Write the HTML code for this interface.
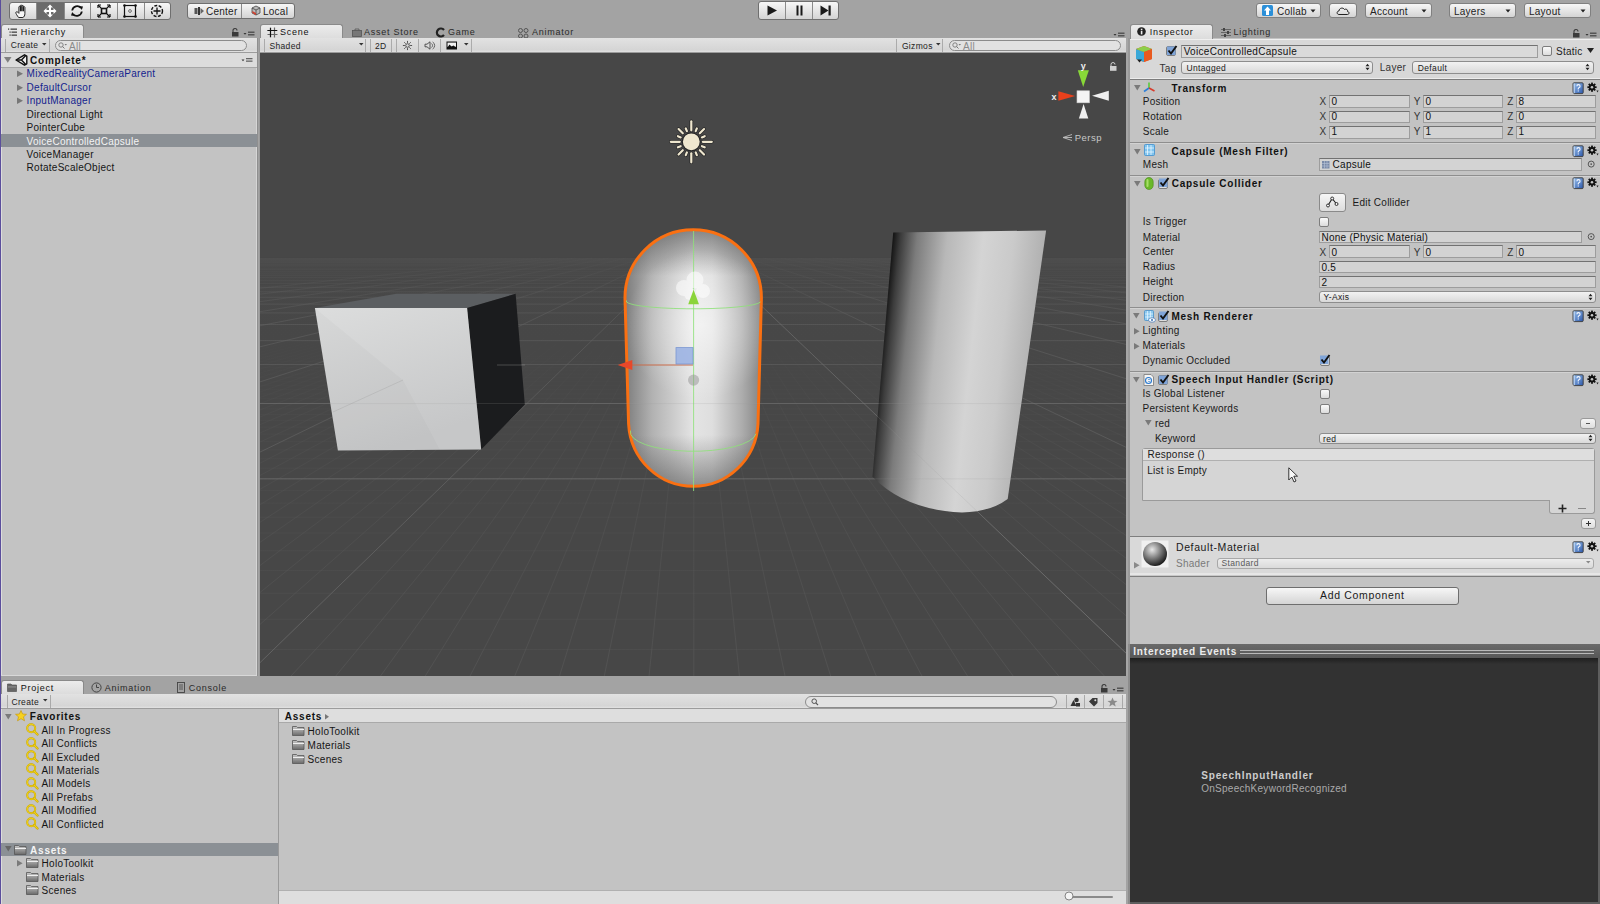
<!DOCTYPE html><html><head><meta charset="utf-8"><style>*{box-sizing:border-box;margin:0;padding:0}
html,body{width:1600px;height:904px;overflow:hidden}
body{position:relative;background:#a3a3a3;font-family:"Liberation Sans",sans-serif;font-size:9.5px;color:#111}
.a{position:absolute}
.t{position:absolute;white-space:pre;line-height:12px}
.tab{position:absolute;border:1px solid #8a8a8a;border-bottom:none;border-radius:3px 3px 0 0;background:linear-gradient(#ececec,#dcdcdc)}
.tb{position:absolute;background:linear-gradient(#e2e2e2,#d5d5d5 85%,#e2e2e2);border-bottom:1px solid #9c9c9c}
.btn{position:absolute;border:1px solid #6f6f6f;border-radius:3px;background:linear-gradient(#f7f7f7,#d4d4d4)}
.fld{position:absolute;background:#d3d3d3;border:1px solid #9d9d9d;border-top-color:#727272}
.dd{position:absolute;border:1px solid #8d8d8d;border-radius:3px;background:linear-gradient(#f2f2f2,#d9d9d9)}
.sep{position:absolute;width:1px;background:#a8a8a8}
svg.a{overflow:visible}
</style></head><body>
<div class="btn" style="left:9px;top:2px;width:162px;height:18px"></div>
<div class="a" style="left:36.0px;top:3.0px;width:28.0px;height:16.0px;background:#6b6b6b"></div>
<div class="a" style="left:36.0px;top:3.0px;width:1.0px;height:16.0px;background:#8a8a8a"></div>
<div class="a" style="left:64.0px;top:3.0px;width:1.0px;height:16.0px;background:#8a8a8a"></div>
<div class="a" style="left:90.0px;top:3.0px;width:1.0px;height:16.0px;background:#8a8a8a"></div>
<div class="a" style="left:117.0px;top:3.0px;width:1.0px;height:16.0px;background:#8a8a8a"></div>
<div class="a" style="left:144.0px;top:3.0px;width:1.0px;height:16.0px;background:#8a8a8a"></div>
<svg class="a" style="left:14px;top:3px;" width="16" height="16" viewBox="0 0 16 16"><path d="M4.6 14.5 C3.2 12.6 1.6 10.6 1.9 9.3 C2.3 8.4 3.4 8.7 4.3 9.7 L4.9 10.3 V4 C4.9 3 6.4 3 6.4 4 V8.2 V2.8 C6.4 1.8 7.9 1.8 7.9 2.8 V8.2 V3.2 C7.9 2.2 9.4 2.2 9.4 3.2 V8.2 V4.4 C9.4 3.4 10.9 3.4 10.9 4.4 V10.6 C10.9 12.6 10.1 14 8.9 14.5 Z" fill="#f6f6f6" stroke="#1a1a1a" stroke-width="0.95" stroke-linejoin="round"/></svg>
<svg class="a" style="left:42px;top:3px;" width="16" height="16" viewBox="0 0 16 16"><path d="M8 1.5 L11 4.5 L9 4.5 L9 7 L11.5 7 L11.5 5 L14.5 8 L11.5 11 L11.5 9 L9 9 L9 11.5 L11 11.5 L8 14.5 L5 11.5 L7 11.5 L7 9 L4.5 9 L4.5 11 L1.5 8 L4.5 5 L4.5 7 L7 7 L7 4.5 L5 4.5 Z" fill="#fff"/></svg>
<svg class="a" style="left:69px;top:3px;" width="16" height="16" viewBox="0 0 16 16"><path d="M3.2 7.5 A5 5 0 0 1 12 5" fill="none" stroke="#111" stroke-width="1.8"/><path d="M12.8 8.5 A5 5 0 0 1 4 11" fill="none" stroke="#111" stroke-width="1.8"/><path d="M10 3 L14 3.5 L12.8 7 Z" fill="#111"/><path d="M6 13 L2 12.5 L3.2 9 Z" fill="#111"/></svg>
<svg class="a" style="left:96px;top:3px;" width="16" height="16" viewBox="0 0 16 16"><rect x="5.5" y="5.5" width="5" height="5" fill="none" stroke="#111" stroke-width="1.6"/><path d="M2 2 L5 5 M14 2 L11 5 M2 14 L5 11 M14 14 L11 11" stroke="#111" stroke-width="1.2"/><path d="M2 2 h3 M2 2 v3 M14 2 h-3 M14 2 v3 M2 14 h3 M2 14 v-3 M14 14 h-3 M14 14 v-3" stroke="#111" stroke-width="1.2"/></svg>
<svg class="a" style="left:122px;top:3px;" width="16" height="16" viewBox="0 0 16 16"><rect x="2.5" y="2.5" width="11" height="11" fill="none" stroke="#111" stroke-width="1.2"/><circle cx="2.5" cy="2.5" r="1.3" fill="#111"/><circle cx="13.5" cy="2.5" r="1.3" fill="#111"/><circle cx="2.5" cy="13.5" r="1.3" fill="#111"/><circle cx="13.5" cy="13.5" r="1.3" fill="#111"/><circle cx="8" cy="8" r="1.4" fill="none" stroke="#555" stroke-width="0.8"/></svg>
<svg class="a" style="left:149px;top:3px;" width="16" height="16" viewBox="0 0 16 16"><circle cx="8" cy="8" r="5.5" fill="none" stroke="#111" stroke-width="1.4" stroke-dasharray="3 1.5"/><path d="M8 4.5 V11.5 M4.5 8 H11.5" stroke="#111" stroke-width="1.3"/></svg>
<div class="btn" style="left:187px;top:3px;width:108px;height:16px"></div>
<div class="a" style="left:241.0px;top:4.0px;width:1.0px;height:14.0px;background:#8a8a8a"></div>
<svg class="a" style="left:194px;top:6px;" width="12" height="10" viewBox="0 0 12 10"><rect x="0.5" y="2" width="3" height="6" fill="#555"/><rect x="4" y="1" width="2" height="8" fill="#333"/><path d="M6.5 2 L10 5 L6.5 8 Z" fill="#666"/></svg>
<div class="t" style="left:206.0px;top:6.0px;font-size:10px;color:#222;letter-spacing:0.25px;">Center</div>
<svg class="a" style="left:251px;top:5px;" width="10" height="12" viewBox="0 0 10 12"><path d="M5 1 L9 3 L9 8 L5 10 L1 8 L1 3 Z" fill="#bbb" stroke="#444" stroke-width="0.8"/><path d="M1 3 L5 5 L9 3 M5 5 V10" stroke="#444" stroke-width="0.8" fill="none"/><path d="M1.3 6 L5 8 L5 10 L1.3 8Z" fill="#d04030"/></svg>
<div class="t" style="left:263.0px;top:6.0px;font-size:10px;color:#222;letter-spacing:0.25px;">Local</div>
<div class="btn" style="left:758px;top:1px;width:81px;height:19px"></div>
<div class="a" style="left:785.0px;top:2.0px;width:1.0px;height:17.0px;background:#8a8a8a"></div>
<div class="a" style="left:812.0px;top:2.0px;width:1.0px;height:17.0px;background:#8a8a8a"></div>
<svg class="a" style="left:765px;top:4px;" width="14" height="13" viewBox="0 0 14 13"><path d="M2.5 1.5 L12 6.5 L2.5 11.5 Z" fill="#1a1a1a"/></svg>
<svg class="a" style="left:792px;top:4px;" width="14" height="13" viewBox="0 0 14 13"><rect x="4.5" y="1.5" width="2" height="10" fill="#1a1a1a"/><rect x="8.5" y="1.5" width="2" height="10" fill="#1a1a1a"/></svg>
<svg class="a" style="left:819px;top:4px;" width="14" height="13" viewBox="0 0 14 13"><path d="M1.5 1.5 L9.5 6.5 L1.5 11.5 Z" fill="#1a1a1a"/><rect x="9.5" y="1.5" width="2.2" height="10" fill="#1a1a1a"/></svg>
<div class="btn" style="left:1256px;top:3px;width:65px;height:15px;border-color:#808080"></div>
<div class="t" style="left:1277.0px;top:6.0px;font-size:10px;color:#222;letter-spacing:0.25px;">Collab</div>
<svg class="a" style="left:1310px;top:9px;" width="6" height="4" viewBox="0 0 6 4"><path d="M0.5 0.5 L5.5 0.5 L3 3.5 Z" fill="#222"/></svg>
<svg class="a" style="left:1262px;top:5px;" width="11" height="11" viewBox="0 0 11 11"><rect x="0" y="0" width="11" height="11" rx="1.5" fill="#2b8fd8"/><path d="M5.5 1.5 L9 5.5 L7 5.5 L7 10 L4 10 L4 5.5 L2 5.5 Z" fill="#fff"/></svg>
<div class="btn" style="left:1329px;top:3px;width:28px;height:15px;border-color:#808080"></div>
<svg class="a" style="left:1336px;top:6px;" width="14" height="10" viewBox="0 0 14 10"><path d="M3 8.5 C0.5 8.5 0.5 5 3 5 C3 2 7 1 8.5 3.5 C10 2.5 12 3.5 11.5 5.5 C13.5 5.5 13.5 8.5 11.5 8.5 Z" fill="none" stroke="#222" stroke-width="1"/></svg>
<div class="btn" style="left:1365px;top:3px;width:67px;height:15px;border-color:#808080"></div>
<div class="t" style="left:1370.0px;top:6.0px;font-size:10px;color:#222;letter-spacing:0.25px;">Account</div>
<svg class="a" style="left:1421px;top:9px;" width="6" height="4" viewBox="0 0 6 4"><path d="M0.5 0.5 L5.5 0.5 L3 3.5 Z" fill="#222"/></svg>
<div class="btn" style="left:1449px;top:3px;width:67px;height:15px;border-color:#808080"></div>
<div class="t" style="left:1454.0px;top:6.0px;font-size:10px;color:#222;letter-spacing:0.25px;">Layers</div>
<svg class="a" style="left:1505px;top:9px;" width="6" height="4" viewBox="0 0 6 4"><path d="M0.5 0.5 L5.5 0.5 L3 3.5 Z" fill="#222"/></svg>
<div class="btn" style="left:1524px;top:3px;width:67px;height:15px;border-color:#808080"></div>
<div class="t" style="left:1529.0px;top:6.0px;font-size:10px;color:#222;letter-spacing:0.25px;">Layout</div>
<svg class="a" style="left:1580px;top:9px;" width="6" height="4" viewBox="0 0 6 4"><path d="M0.5 0.5 L5.5 0.5 L3 3.5 Z" fill="#222"/></svg>
<div class="a" style="left:0;top:0;width:1px;height:904px;background:#5b4e9c"></div>
<div class="a" style="left:1.0px;top:38.0px;width:256.0px;height:638.0px;background:#c3c3c3"></div>
<div class="a" style="left:257.0px;top:38.0px;width:1.0px;height:638.0px;background:#8f8f8f"></div>
<div class="a" style="left:1.0px;top:68.0px;width:1.0px;height:607.0px;background:#dcdcdc"></div>
<div class="a" style="left:256.0px;top:68.0px;width:1.0px;height:607.0px;background:#d6d6d6"></div>
<div class="a" style="left:1.0px;top:675.0px;width:256.0px;height:1.0px;background:#d8d8d8"></div>
<div class="tab" style="left:1px;top:24px;width:83px;height:15px"></div>
<svg class="a" style="left:8px;top:28px;" width="10" height="9" viewBox="0 0 10 9"><rect x="0" y="0.5" width="1.2" height="1.2" fill="#333"/><rect x="2.5" y="0.5" width="6.5" height="1.3" fill="#444"/><rect x="1.5" y="3.5" width="1.2" height="1.2" fill="#333"/><rect x="3.5" y="3.5" width="5.5" height="1.3" fill="#444"/><rect x="1.5" y="6.5" width="1.2" height="1.2" fill="#333"/><rect x="3.5" y="6.5" width="5.5" height="1.3" fill="#444"/></svg>
<div class="t" style="left:20.8px;top:26.0px;font-size:9px;color:#111;letter-spacing:0.75px;">Hierarchy</div>
<svg class="a" style="left:231px;top:28px;" width="8" height="9" viewBox="0 0 8 9"><path d="M2 4 V2.5 A2 2 0 0 1 6 2.5" fill="none" stroke="#3a3a3a" stroke-width="1.1"/><rect x="1" y="4" width="6.5" height="4.5" fill="#3a3a3a"/></svg>
<svg class="a" style="left:243px;top:31px;" width="12" height="6" viewBox="0 0 12 6"><path d="M0.5 2 L3.5 2 L2 3.8 Z" fill="#333"/><rect x="5" y="0.5" width="6.5" height="1.5" fill="#555"/><rect x="5" y="3" width="6.5" height="1.5" fill="#555"/></svg>
<div class="tb" style="left:1px;top:38px;width:256px;height:15px"></div>
<div class="a" style="left:5.0px;top:39.0px;width:1.0px;height:13.0px;background:#a9a9a9"></div>
<div class="a" style="left:49.0px;top:39.0px;width:1.0px;height:13.0px;background:#a9a9a9"></div>
<div class="t" style="left:10.7px;top:39.0px;font-size:8.5px;color:#222;letter-spacing:0.35px;">Create</div>
<svg class="a" style="left:42px;top:43px;" width="5" height="3" viewBox="0 0 5 3"><path d="M0 0 L4.5 0 L2.25 2.5 Z" fill="#333"/></svg>
<div class="a" style="left:55px;top:40px;width:192px;height:11px;border:1px solid #8c8c8c;border-radius:6px;background:#e2e2e2"></div>
<svg class="a" style="left:58px;top:42px;" width="10" height="8" viewBox="0 0 10 8"><circle cx="3" cy="3" r="2.2" fill="none" stroke="#777" stroke-width="0.9"/><path d="M4.5 4.5 L6.5 6.5" stroke="#777" stroke-width="1"/><path d="M6.5 2 L9 2 L7.75 3.5 Z" fill="#777"/></svg>
<div class="t" style="left:69.0px;top:41.0px;font-size:10px;color:#8a8a8a;letter-spacing:0.25px;">All</div>
<div class="a" style="left:1.0px;top:53.0px;width:256.0px;height:14.0px;background:#dcdcdc"></div>
<div class="a" style="left:1.0px;top:67.0px;width:256.0px;height:1.0px;background:#a6a6a6"></div>
<svg class="a" style="left:4px;top:57px;" width="8" height="6" viewBox="0 0 8 6"><path d="M0 0 L7.5 0 L3.75 5.8 Z" fill="#808080"/></svg>
<svg class="a" style="left:15px;top:54px;" width="13" height="12" viewBox="0 0 13 12"><path d="M1 6 L9.5 0.8 L11.8 2.2 L11.8 9.8 L9.5 11.2 Z" fill="#f2f2f2" stroke="#111" stroke-width="1.4" stroke-linejoin="round"/><path d="M6.5 6 L1.5 6 M6.5 6 L10.5 1.8 M6.5 6 L10.5 10.2" stroke="#111" stroke-width="1.4"/></svg>
<div class="t" style="left:30.1px;top:55.0px;font-size:10px;font-weight:bold;color:#111;letter-spacing:0.75px;">Complete*</div>
<svg class="a" style="left:241px;top:58px;" width="12" height="5" viewBox="0 0 12 5"><path d="M0.5 1.5 L3.5 1.5 L2 3.3 Z" fill="#333"/><rect x="5" y="0" width="6.5" height="1.3" fill="#666"/><rect x="5" y="2.5" width="6.5" height="1.3" fill="#666"/></svg>
<svg class="a" style="left:17px;top:70.3px;" width="7" height="8" viewBox="0 0 7 8"><path d="M0 0.5 L6 3.75 L0 7 Z" fill="#777"/></svg>
<div class="t" style="left:26.6px;top:68.0px;font-size:10px;color:#14248e;letter-spacing:0.27px;">MixedRealityCameraParent</div>
<svg class="a" style="left:17px;top:83.75px;" width="7" height="8" viewBox="0 0 7 8"><path d="M0 0.5 L6 3.75 L0 7 Z" fill="#777"/></svg>
<div class="t" style="left:26.6px;top:82.0px;font-size:10px;color:#14248e;letter-spacing:0.27px;">DefaultCursor</div>
<svg class="a" style="left:17px;top:97.19999999999999px;" width="7" height="8" viewBox="0 0 7 8"><path d="M0 0.5 L6 3.75 L0 7 Z" fill="#777"/></svg>
<div class="t" style="left:26.6px;top:95.0px;font-size:10px;color:#14248e;letter-spacing:0.27px;">InputManager</div>
<div class="t" style="left:26.6px;top:109.0px;font-size:10px;color:#151515;letter-spacing:0.27px;">Directional Light</div>
<div class="t" style="left:26.6px;top:122.0px;font-size:10px;color:#151515;letter-spacing:0.27px;">PointerCube</div>
<div class="a" style="left:1.0px;top:133.7px;width:256.0px;height:13.0px;background:#8b9095"></div>
<div class="t" style="left:26.6px;top:136.0px;font-size:10px;color:#f4f4f4;letter-spacing:0.27px;">VoiceControlledCapsule</div>
<div class="t" style="left:26.6px;top:149.0px;font-size:10px;color:#151515;letter-spacing:0.27px;">VoiceManager</div>
<div class="t" style="left:26.6px;top:162.0px;font-size:10px;color:#151515;letter-spacing:0.27px;">RotateScaleObject</div>
<div class="a" style="left:259.0px;top:38.0px;width:1.0px;height:638.0px;background:#9a9a9a"></div>
<div class="a" style="left:1126.0px;top:38.0px;width:2.0px;height:638.0px;background:#a6a6a6"></div>
<div class="tab" style="left:260px;top:24px;width:83px;height:15px"></div>
<svg class="a" style="left:267px;top:27px;" width="11" height="11" viewBox="0 0 11 11"><path d="M3.5 0.5 V10.5 M7.5 0.5 V10.5 M0.5 3.5 H10.5 M0.5 7.5 H10.5" stroke="#666" stroke-width="1.2"/><path d="M3.5 1 V10 M0.5 3.5 H10" stroke="#111" stroke-width="1.1"/></svg>
<div class="t" style="left:280.1px;top:26.0px;font-size:9px;color:#111;letter-spacing:0.75px;">Scene</div>
<svg class="a" style="left:352px;top:28px;" width="10" height="9" viewBox="0 0 10 9"><rect x="0.5" y="2.5" width="9" height="6" fill="#777" stroke="#555" stroke-width="0.8"/><path d="M3 2.5 V1 H7 V2.5" fill="none" stroke="#555" stroke-width="0.8"/></svg>
<div class="t" style="left:364.0px;top:26.0px;font-size:9px;color:#2a2a2a;letter-spacing:0.75px;">Asset Store</div>
<svg class="a" style="left:436px;top:28px;" width="9" height="9" viewBox="0 0 9 9"><path d="M8 2 A4 4 0 1 0 8 7" fill="none" stroke="#222" stroke-width="2.2"/></svg>
<div class="t" style="left:448.0px;top:26.0px;font-size:9px;color:#2a2a2a;letter-spacing:0.75px;">Game</div>
<svg class="a" style="left:518px;top:28px;" width="11" height="11" viewBox="0 0 11 11"><circle cx="2.5" cy="2.5" r="2" fill="none" stroke="#555" stroke-width="1"/><circle cx="8" cy="2.5" r="2" fill="none" stroke="#555" stroke-width="1"/><circle cx="2.5" cy="8" r="2" fill="none" stroke="#555" stroke-width="1"/><circle cx="8" cy="8" r="2" fill="none" stroke="#555" stroke-width="1"/></svg>
<div class="t" style="left:531.9px;top:26.0px;font-size:9px;color:#2a2a2a;letter-spacing:0.75px;">Animator</div>
<svg class="a" style="left:1113px;top:32px;" width="12" height="6" viewBox="0 0 12 6"><path d="M0.5 2 L3.5 2 L2 3.8 Z" fill="#333"/><rect x="5" y="0.5" width="6.5" height="1.5" fill="#555"/><rect x="5" y="3" width="6.5" height="1.5" fill="#555"/></svg>
<div class="tb" style="left:260px;top:38px;width:866px;height:15px"></div>
<div class="a" style="left:264.0px;top:39.0px;width:1.0px;height:13.0px;background:#ababab"></div>
<div class="a" style="left:365.0px;top:39.0px;width:1.0px;height:13.0px;background:#ababab"></div>
<div class="a" style="left:370.0px;top:39.0px;width:1.0px;height:13.0px;background:#ababab"></div>
<div class="a" style="left:391.0px;top:39.0px;width:1.0px;height:13.0px;background:#ababab"></div>
<div class="a" style="left:396.0px;top:39.0px;width:1.0px;height:13.0px;background:#ababab"></div>
<div class="a" style="left:418.0px;top:39.0px;width:1.0px;height:13.0px;background:#ababab"></div>
<div class="a" style="left:440.0px;top:39.0px;width:1.0px;height:13.0px;background:#ababab"></div>
<div class="a" style="left:471.0px;top:39.0px;width:1.0px;height:13.0px;background:#ababab"></div>
<div class="a" style="left:896.0px;top:39.0px;width:1.0px;height:13.0px;background:#ababab"></div>
<div class="a" style="left:942.0px;top:39.0px;width:1.0px;height:13.0px;background:#ababab"></div>
<div class="t" style="left:269.4px;top:40.0px;font-size:8.5px;color:#222;letter-spacing:0.35px;">Shaded</div>
<svg class="a" style="left:359px;top:43px;" width="5" height="3" viewBox="0 0 5 3"><path d="M0 0 L4.5 0 L2.25 2.5 Z" fill="#333"/></svg>
<div class="t" style="left:375.0px;top:40.0px;font-size:8.5px;color:#222;letter-spacing:0.35px;">2D</div>
<svg class="a" style="left:402px;top:40px;" width="11" height="11" viewBox="0 0 11 11"><line x1="8.10" y1="5.50" x2="10.10" y2="5.50" stroke="#444" stroke-width="0.9"/><line x1="7.34" y1="7.34" x2="8.75" y2="8.75" stroke="#444" stroke-width="0.9"/><line x1="5.50" y1="8.10" x2="5.50" y2="10.10" stroke="#444" stroke-width="0.9"/><line x1="3.66" y1="7.34" x2="2.25" y2="8.75" stroke="#444" stroke-width="0.9"/><line x1="2.90" y1="5.50" x2="0.90" y2="5.50" stroke="#444" stroke-width="0.9"/><line x1="3.66" y1="3.66" x2="2.25" y2="2.25" stroke="#444" stroke-width="0.9"/><line x1="5.50" y1="2.90" x2="5.50" y2="0.90" stroke="#444" stroke-width="0.9"/><line x1="7.34" y1="3.66" x2="8.75" y2="2.25" stroke="#444" stroke-width="0.9"/><circle cx="5.5" cy="5.5" r="1.8" fill="none" stroke="#444" stroke-width="0.9"/></svg>
<svg class="a" style="left:424px;top:40px;" width="11" height="11" viewBox="0 0 11 11"><path d="M1 4.2 H3 L6 1.8 V9.2 L3 6.8 H1 Z" fill="#ddd" stroke="#444" stroke-width="0.9"/><path d="M7.5 3.5 A2.5 2.5 0 0 1 7.5 7.5 M8.6 2 A4 4 0 0 1 8.6 9" fill="none" stroke="#555" stroke-width="0.9"/></svg>
<svg class="a" style="left:446px;top:41px;" width="12" height="9" viewBox="0 0 12 9"><rect x="0.5" y="0.5" width="10.5" height="8" fill="#111"/><rect x="1.5" y="1.6" width="8.5" height="4.2" fill="#f2f2f2"/><path d="M1.5 6.5 L3.5 3.5 L5.5 5.5 L7.5 4.5 L10 6.5 Z" fill="#111"/></svg>
<svg class="a" style="left:464px;top:43px;" width="5" height="3" viewBox="0 0 5 3"><path d="M0 0 L4.5 0 L2.25 2.5 Z" fill="#333"/></svg>
<div class="t" style="left:901.9px;top:40.0px;font-size:8.5px;color:#222;letter-spacing:0.35px;">Gizmos</div>
<svg class="a" style="left:936px;top:43px;" width="5" height="3" viewBox="0 0 5 3"><path d="M0 0 L4.5 0 L2.25 2.5 Z" fill="#333"/></svg>
<div class="a" style="left:949px;top:40px;width:172px;height:11px;border:1px solid #8c8c8c;border-radius:6px;background:#e2e2e2"></div>
<svg class="a" style="left:952px;top:42px;" width="10" height="8" viewBox="0 0 10 8"><circle cx="3" cy="3" r="2.2" fill="none" stroke="#777" stroke-width="0.9"/><path d="M4.5 4.5 L6.5 6.5" stroke="#777" stroke-width="1"/><path d="M6.5 2 L9 2 L7.75 3.5 Z" fill="#777"/></svg>
<div class="t" style="left:963.0px;top:41.0px;font-size:10px;color:#8a8a8a;letter-spacing:0.25px;">All</div>
<svg class="a" style="left:0px;top:0px;pointer-events:none" width="1600" height="904" viewBox="0 0 1600 904"><defs><linearGradient id="gmin" gradientUnits="userSpaceOnUse" x1="0" y1="330" x2="0" y2="676"><stop offset="0" stop-color="#5a5a5a" stop-opacity="0"/><stop offset="0.3" stop-color="#5a5a5a" stop-opacity="0.25"/><stop offset="1" stop-color="#5c5c5c" stop-opacity="0.5"/></linearGradient><linearGradient id="gmaj" gradientUnits="userSpaceOnUse" x1="0" y1="256" x2="0" y2="676"><stop offset="0" stop-color="#606060" stop-opacity="0.05"/><stop offset="0.15" stop-color="#606060" stop-opacity="0.55"/><stop offset="1" stop-color="#636363" stop-opacity="1"/></linearGradient><linearGradient id="cubef" x1="0" y1="0" x2="0.4" y2="1"><stop offset="0" stop-color="#dcdddd"/><stop offset="1" stop-color="#c6c7c8"/></linearGradient><linearGradient id="caph" x1="0" y1="0" x2="1" y2="0"><stop offset="0" stop-color="#7c7c7c"/><stop offset="0.2" stop-color="#b2b2b2"/><stop offset="0.5" stop-color="#e4e4e4"/><stop offset="0.64" stop-color="#dedede"/><stop offset="0.86" stop-color="#acacac"/><stop offset="1" stop-color="#838383"/></linearGradient><linearGradient id="capv" x1="0" y1="0" x2="0" y2="1"><stop offset="0" stop-color="#3a3a3a" stop-opacity="0.55"/><stop offset="0.18" stop-color="#3a3a3a" stop-opacity="0"/><stop offset="0.8" stop-color="#3a3a3a" stop-opacity="0"/><stop offset="1" stop-color="#3a3a3a" stop-opacity="0.5"/></linearGradient><linearGradient id="cyl" gradientUnits="userSpaceOnUse" x1="881" y1="350" x2="1030" y2="366"><stop offset="0" stop-color="#151515"/><stop offset="0.05" stop-color="#3c3c3c"/><stop offset="0.16" stop-color="#7c7c7c"/><stop offset="0.36" stop-color="#b8b8b8"/><stop offset="0.6" stop-color="#d4d4d4"/><stop offset="0.8" stop-color="#cacaca"/><stop offset="1" stop-color="#b2b2b2"/></linearGradient></defs><rect x="260" y="53" width="866" height="623" fill="#474747"/><linearGradient id="farb" x1="0" y1="0" x2="0" y2="1"><stop offset="0" stop-color="#4e4e4e" stop-opacity="0"/><stop offset="0.35" stop-color="#4e4e4e" stop-opacity="0.12"/><stop offset="1" stop-color="#4e4e4e" stop-opacity="0"/></linearGradient><rect x="260" y="255" width="866" height="85" fill="url(#farb)"/><path d="M260.00 331.11L265.37 330.00M260.00 333.06L274.49 330.00M260.00 335.09L283.60 330.00M260.00 337.22L292.72 330.00M260.00 339.45L301.83 330.00M260.00 341.78L310.95 330.00M260.00 344.22L320.06 330.00M260.00 349.49L338.30 330.00M260.00 352.33L347.41 330.00M260.00 355.33L356.53 330.00M260.00 358.49L365.64 330.00M260.00 361.83L374.76 330.00M260.00 365.37L383.87 330.00M260.00 369.13L392.99 330.00M260.00 373.11L402.10 330.00M260.00 377.36L411.22 330.00M260.00 386.73L429.45 330.00M260.00 391.92L438.57 330.00M260.00 397.49L447.68 330.00M260.00 403.49L456.80 330.00M260.00 409.97L465.91 330.00M260.00 416.99L475.03 330.00M260.00 424.62L484.14 330.00M260.00 432.94L493.26 330.00M260.00 442.05L502.37 330.00M260.00 463.17L520.61 330.00M260.00 475.48L529.72 330.00M260.00 489.24L538.84 330.00M260.00 504.73L547.95 330.00M260.00 522.28L557.07 330.00M260.00 542.33L566.18 330.00M260.00 565.47L575.30 330.00M260.00 592.47L584.41 330.00M260.00 624.38L593.53 330.00M291.02 676.00L611.76 330.00M335.77 676.00L620.88 330.00M380.53 676.00L629.99 330.00M425.28 676.00L639.11 330.00M470.03 676.00L648.22 330.00M514.79 676.00L657.34 330.00M559.54 676.00L666.45 330.00M604.29 676.00L675.57 330.00M649.05 676.00L684.68 330.00M693.80 676.00L693.80 330.00M739.42 676.00L703.09 330.00M785.04 676.00L712.38 330.00M830.67 676.00L721.68 330.00M876.29 676.00L730.97 330.00M921.91 676.00L740.26 330.00M967.54 676.00L749.55 330.00M1013.16 676.00L758.85 330.00M1058.78 676.00L768.14 330.00M1104.40 676.00L777.43 330.00M1126.00 615.70L796.02 330.00M1126.00 584.52L805.31 330.00M1126.00 558.13L814.60 330.00M1126.00 535.51L823.89 330.00M1126.00 515.91L833.19 330.00M1126.00 498.76L842.48 330.00M1126.00 483.63L851.77 330.00M1126.00 470.18L861.06 330.00M1126.00 458.14L870.36 330.00M1126.00 437.51L888.94 330.00M1126.00 428.60L898.24 330.00M1126.00 420.46L907.53 330.00M1126.00 413.01L916.82 330.00M1126.00 406.15L926.11 330.00M1126.00 399.82L935.40 330.00M1126.00 393.95L944.70 330.00M1126.00 388.51L953.99 330.00M1126.00 383.44L963.28 330.00M1126.00 374.28L981.87 330.00M1126.00 370.13L991.16 330.00M1126.00 366.23L1000.45 330.00M1126.00 362.56L1009.75 330.00M1126.00 359.11L1019.04 330.00M1126.00 355.84L1028.33 330.00M1126.00 352.75L1037.62 330.00M1126.00 349.82L1046.91 330.00M1126.00 347.04L1056.21 330.00M1126.00 341.89L1074.79 330.00M1126.00 339.50L1084.09 330.00M1126.00 337.23L1093.38 330.00M1126.00 335.05L1102.67 330.00M1126.00 332.97L1111.96 330.00M1126.00 330.98L1121.26 330.00" stroke="url(#gmin)" stroke-width="1" fill="none"/><path d="M260 649.45H1126M260 619.27H1126M260 593.26H1126M260 570.59H1126M260 550.67H1126M260 533.02H1126M260 517.28H1126M260 503.15H1126M260 490.40H1126M260 468.30H1126M260 458.66H1126M260 449.80H1126M260 441.64H1126M260 434.09H1126M260 427.09H1126M260 420.58H1126M260 414.52H1126M260 408.85H1126M260 398.56H1126M260 393.87H1126M260 389.46H1126M260 385.29H1126M260 381.35H1126M260 377.63H1126M260 374.09H1126M260 370.74H1126M260 367.55H1126M260 361.62H1126M260 358.86H1126M260 356.22H1126" stroke="url(#gmin)" stroke-opacity="0.6" stroke-width="1" fill="none"/><path d="M260 283.53H1126M260 280.33H1126M260 277.59H1126M260 275.21H1126M260 273.12H1126M260 271.28H1126M260 269.64H1126M260 268.17H1126M260 266.84H1126M260 265.65H1126M260 264.56H1126M260 263.56H1126M260 262.65H1126M260 261.81H1126M260 261.03H1126M260 260.31H1126M260 259.64H1126M260 259.02H1126M260 258.44H1126" stroke="#585858" stroke-opacity="0.3" stroke-width="1" fill="none"/><path d="M260 478.84H1126M260 403.54H1126M260 364.51H1126M260 340.64H1126M260 324.52H1126M260 312.91H1126M260 304.15H1126M260 297.31H1126M260 291.81H1126M260 287.30H1126M260.00 288.30L540.85 258.00M260.00 294.15L557.84 258.00M260.00 301.67L574.83 258.00M260.00 311.69L591.83 258.00M260.00 325.73L608.82 258.00M260.00 346.79L625.82 258.00M260.00 381.89L642.81 258.00M260.00 452.08L659.81 258.00M260.00 662.67L676.80 258.00M1126.00 653.12L711.12 258.00M1126.00 447.31L728.45 258.00M1126.00 378.71L745.77 258.00M1126.00 344.40L763.10 258.00M1126.00 323.82L780.42 258.00M1126.00 310.10L797.75 258.00M1126.00 300.30L815.07 258.00M1126.00 292.95L832.40 258.00M1126.00 287.24L849.72 258.00" stroke="url(#gmaj)" stroke-width="1" fill="none"/><polygon points="314.9,308 396.3,293.8 515.6,293.8 467.1,308" fill="#5b5e61"/><polygon points="467.1,308 515.6,293.8 524.8,404.6 481.2,449.6" fill="#1b1c1e"/><polygon points="314.9,308 467.1,308 481.2,449.6 337.9,450.6" fill="url(#cubef)"/><polygon points="314.9,308 403,380 440,450 337.9,450.6" fill="#000" opacity="0.018"/><path d="M497 365 H525 M333 412 L403 380" stroke="#a0a0a0" stroke-opacity="0.35" stroke-width="1"/><path d="M893.2 232.5 L1046.1 230.5 L1007.7 498.9 Q990 512 962 512.5 Q905 510 872.5 476.7 Z" fill="url(#cyl)"/><path d="M625 298 A68.2 68.2 0 0 1 761.4 298 L758 424 A64.8 66 0 0 1 628.6 424 Z" fill="url(#caph)"/><path d="M625 298 A68.2 68.2 0 0 1 761.4 298 L758 424 A64.8 66 0 0 1 628.6 424 Z" fill="url(#capv)"/><radialGradient id="caphl" gradientUnits="userSpaceOnUse" cx="700" cy="325" r="75"><stop offset="0" stop-color="#ffffff" stop-opacity="0.55"/><stop offset="1" stop-color="#ffffff" stop-opacity="0"/></radialGradient><path d="M625 298 A68.2 68.2 0 0 1 761.4 298 L758 424 A64.8 66 0 0 1 628.6 424 Z" fill="url(#caphl)"/><path d="M625 298 A68.2 68.2 0 0 1 761.4 298 L758 424 A64.8 66 0 0 1 628.6 424 Z" fill="none" stroke="#fa7012" stroke-width="3"/><path d="M626.5 300.5 A66.8 7.5 0 0 0 760.5 302 M630.5 430.6 A62.5 19 0 0 0 756 433.7 M693.6 231 V491" fill="none" stroke="#8fe07a" stroke-width="1" opacity="0.85"/><g fill="#ffffff" opacity="0.55"><circle cx="684" cy="288" r="8"/><circle cx="695" cy="280" r="8.5"/><circle cx="703" cy="291" r="7"/><circle cx="690" cy="294" r="6"/></g><path d="M693.6 289.7 L699 304.2 L688.2 304.2 Z" fill="#8bd43a"/><line x1="632" y1="365" x2="693" y2="365" stroke="#c86a48" stroke-width="1"/><path d="M617.7 365 L632.3 360 L632.3 370 Z" fill="#e8482a"/><rect x="676" y="347.6" width="17" height="16.4" fill="#9db4e4" stroke="#7090d0" stroke-width="0.8" opacity="0.9"/><circle cx="693.6" cy="380.1" r="5.6" fill="#8a8a8a" opacity="0.45"/><path d="M260 478.84H1126M260 403.54H1126M1126.00 653.12L755.22 300" stroke="#9a9a9a" stroke-opacity="0.18" stroke-width="1" fill="none"/><g stroke="#222" stroke-opacity="0.9"><line x1="702.80" y1="141.80" x2="711.80" y2="141.80" stroke-linecap="round" stroke-width="3.6"/><line x1="701.92" y1="146.20" x2="704.70" y2="147.35" stroke-linecap="round" stroke-width="3.6"/><line x1="699.79" y1="150.29" x2="704.03" y2="154.53" stroke-linecap="round" stroke-width="3.6"/><line x1="695.70" y1="152.42" x2="696.85" y2="155.20" stroke-linecap="round" stroke-width="3.6"/><line x1="691.30" y1="153.30" x2="691.30" y2="162.30" stroke-linecap="round" stroke-width="3.6"/><line x1="686.90" y1="152.42" x2="685.75" y2="155.20" stroke-linecap="round" stroke-width="3.6"/><line x1="682.81" y1="150.29" x2="678.57" y2="154.53" stroke-linecap="round" stroke-width="3.6"/><line x1="680.68" y1="146.20" x2="677.90" y2="147.35" stroke-linecap="round" stroke-width="3.6"/><line x1="679.80" y1="141.80" x2="670.80" y2="141.80" stroke-linecap="round" stroke-width="3.6"/><line x1="680.68" y1="137.40" x2="677.90" y2="136.25" stroke-linecap="round" stroke-width="3.6"/><line x1="682.81" y1="133.31" x2="678.57" y2="129.07" stroke-linecap="round" stroke-width="3.6"/><line x1="686.90" y1="131.18" x2="685.75" y2="128.40" stroke-linecap="round" stroke-width="3.6"/><line x1="691.30" y1="130.30" x2="691.30" y2="121.30" stroke-linecap="round" stroke-width="3.6"/><line x1="695.70" y1="131.18" x2="696.85" y2="128.40" stroke-linecap="round" stroke-width="3.6"/><line x1="699.79" y1="133.31" x2="704.03" y2="129.07" stroke-linecap="round" stroke-width="3.6"/><line x1="701.92" y1="137.40" x2="704.70" y2="136.25" stroke-linecap="round" stroke-width="3.6"/></g><g stroke="#efe7cf"><line x1="702.80" y1="141.80" x2="711.80" y2="141.80" stroke-linecap="round" stroke-width="2.2"/><line x1="701.92" y1="146.20" x2="704.70" y2="147.35" stroke-linecap="round" stroke-width="2.2"/><line x1="699.79" y1="150.29" x2="704.03" y2="154.53" stroke-linecap="round" stroke-width="2.2"/><line x1="695.70" y1="152.42" x2="696.85" y2="155.20" stroke-linecap="round" stroke-width="2.2"/><line x1="691.30" y1="153.30" x2="691.30" y2="162.30" stroke-linecap="round" stroke-width="2.2"/><line x1="686.90" y1="152.42" x2="685.75" y2="155.20" stroke-linecap="round" stroke-width="2.2"/><line x1="682.81" y1="150.29" x2="678.57" y2="154.53" stroke-linecap="round" stroke-width="2.2"/><line x1="680.68" y1="146.20" x2="677.90" y2="147.35" stroke-linecap="round" stroke-width="2.2"/><line x1="679.80" y1="141.80" x2="670.80" y2="141.80" stroke-linecap="round" stroke-width="2.2"/><line x1="680.68" y1="137.40" x2="677.90" y2="136.25" stroke-linecap="round" stroke-width="2.2"/><line x1="682.81" y1="133.31" x2="678.57" y2="129.07" stroke-linecap="round" stroke-width="2.2"/><line x1="686.90" y1="131.18" x2="685.75" y2="128.40" stroke-linecap="round" stroke-width="2.2"/><line x1="691.30" y1="130.30" x2="691.30" y2="121.30" stroke-linecap="round" stroke-width="2.2"/><line x1="695.70" y1="131.18" x2="696.85" y2="128.40" stroke-linecap="round" stroke-width="2.2"/><line x1="699.79" y1="133.31" x2="704.03" y2="129.07" stroke-linecap="round" stroke-width="2.2"/><line x1="701.92" y1="137.40" x2="704.70" y2="136.25" stroke-linecap="round" stroke-width="2.2"/></g><circle cx="691.3" cy="141.8" r="9.5" fill="#222" opacity="0.9"/><circle cx="691.3" cy="141.8" r="8.4" fill="#efe7cf"/><path d="M1077.8 70.2 L1088.9 70.2 L1083.2 87 Z" fill="#88d838"/><path d="M1058.4 91.2 L1075.2 96 L1058.4 100.7 Z" fill="#e8401c"/><path d="M1108.8 90.7 L1092 95.8 L1108.8 100.7 Z" fill="#f0f0f0"/><path d="M1078.9 118.6 L1083.6 103.9 L1088.3 118.6 Z" fill="#f0f0f0"/><rect x="1077" y="90.8" width="12.4" height="12" fill="#f4f4f4" stroke="#d0d0d0" stroke-width="0.6"/><text x="1083.2" y="68.5" font-family="Liberation Sans" font-weight="bold" font-size="9" fill="#f0f0f0" text-anchor="middle">y</text><text x="1054" y="99.5" font-family="Liberation Sans" font-weight="bold" font-size="9" fill="#f0f0f0" text-anchor="middle">x</text><path d="M1111 66 V64.5 A2 2 0 0 1 1115 64.5" fill="none" stroke="#cfcfcf" stroke-width="1"/><rect x="1110" y="66" width="6.5" height="4.8" fill="#cfcfcf"/><path d="M1072 134.5 L1063 137.5 L1072 140.5 M1072 137.5 L1063 137.5" fill="none" stroke="#c0c0c0" stroke-width="0.9"/><text x="1074.7" y="140.6" font-family="Liberation Sans" font-size="9.5" letter-spacing="0.5" fill="#c8c8c8">Persp</text></svg>
<div class="a" style="left:1128.0px;top:38.0px;width:2.0px;height:606.0px;background:#9a9a9a"></div>
<div class="a" style="left:1130.0px;top:38.0px;width:470.0px;height:606.0px;background:#c3c3c3"></div>
<div class="tab" style="left:1130px;top:24px;width:83px;height:15px"></div>
<svg class="a" style="left:1137px;top:27px;" width="9" height="9" viewBox="0 0 9 9"><circle cx="4.5" cy="4.5" r="4.3" fill="#222"/><rect x="3.8" y="1.7" width="1.6" height="1.4" fill="#eee"/><rect x="3.8" y="3.8" width="1.6" height="3.6" fill="#eee"/></svg>
<div class="t" style="left:1149.7px;top:26.0px;font-size:9px;color:#111;letter-spacing:0.75px;">Inspector</div>
<svg class="a" style="left:1221px;top:28px;" width="10" height="9" viewBox="0 0 10 9"><path d="M0 1.5 H10 M0 4.5 H10 M0 7.5 H10" stroke="#666" stroke-width="1"/><rect x="2" y="0" width="2" height="3" fill="#444"/><rect x="6" y="3" width="2" height="3" fill="#444"/><rect x="3" y="6" width="2" height="3" fill="#444"/></svg>
<div class="t" style="left:1233.6px;top:26.0px;font-size:9px;color:#2a2a2a;letter-spacing:0.75px;">Lighting</div>
<svg class="a" style="left:1572px;top:29px;" width="8" height="9" viewBox="0 0 8 9"><path d="M2 4 V2.5 A2 2 0 0 1 6 2.5" fill="none" stroke="#3a3a3a" stroke-width="1.1"/><rect x="1" y="4" width="6.5" height="4.5" fill="#3a3a3a"/></svg>
<svg class="a" style="left:1585px;top:32px;" width="12" height="6" viewBox="0 0 12 6"><path d="M0.5 2 L3.5 2 L2 3.8 Z" fill="#333"/><rect x="5" y="0.5" width="6.5" height="1.5" fill="#555"/><rect x="5" y="3" width="6.5" height="1.5" fill="#555"/></svg>
<div class="a" style="left:1130.0px;top:39.0px;width:470.0px;height:40.0px;background:#d8d8d8;border-top:1px solid #efefef;border-bottom:1px solid #ececec"></div>
<div class="a" style="left:1130.0px;top:79.0px;width:470.0px;height:1.0px;background:#7c7c7c"></div>
<svg class="a" style="left:1134px;top:44px;" width="20" height="20" viewBox="0 0 20 20"><path d="M2 5 L10 2 L18 5 L18 15 L10 18 L2 15 Z" fill="#e0522a"/><path d="M2 5 L10 8 L10 18 L2 15 Z" fill="#3aa8d8"/><path d="M2 5 L10 2 L18 5 L10 8 Z" fill="#8ccf4a"/><path d="M10 8 L18 5 L18 15 L10 18 Z" fill="#e85a20"/><path d="M3 15.5 L8 15.5 L5.5 18.5 Z" fill="#222"/></svg>
<div class="a" style="left:1166.2px;top:46.0px;width:10px;height:10px;border:1px solid #7d7d7d;border-radius:2px;background:linear-gradient(#fafafa,#dcdcdc)"></div>
<svg class="a" style="left:1167px;top:45px;" width="10" height="11" viewBox="0 0 10 11"><rect x="0" y="1.5" width="8.5" height="8.5" fill="#7fa4d8"/><path d="M1.5 5.5 L4 8.5 L9.5 1" fill="none" stroke="#111" stroke-width="1.9"/></svg>
<div class="fld" style="left:1181.0px;top:44.7px;width:356.5px;height:13.1px;background:#dadada"></div>
<div class="t" style="left:1183.7px;top:46.0px;font-size:10px;color:#111;letter-spacing:0.30000000000000004px;">VoiceControlledCapsule</div>
<div class="a" style="left:1542.4px;top:46.3px;width:10px;height:10px;border:1px solid #7d7d7d;border-radius:2px;background:linear-gradient(#fafafa,#dcdcdc)"></div>
<div class="t" style="left:1556.0px;top:46.0px;font-size:10px;color:#222;letter-spacing:0.25px;">Static</div>
<svg class="a" style="left:1587px;top:48px;" width="8" height="6" viewBox="0 0 8 6"><path d="M0 0 L7 0 L3.5 5 Z" fill="#222"/></svg>
<div class="t" style="left:1159.4px;top:63.0px;font-size:10px;color:#333;letter-spacing:0.25px;">Tag</div>
<div class="dd" style="left:1181.0px;top:61.0px;width:192.4px;height:13.0px"></div>
<div class="t" style="left:1186.5px;top:62.0px;font-size:8.5px;color:#1a1a1a;letter-spacing:0.35px;">Untagged</div>
<svg class="a" style="left:1365px;top:63px;" width="5" height="8" viewBox="0 0 5 8"><path d="M0.5 3.3 L2.5 0.8 L4.5 3.3 Z M0.5 4.7 L2.5 7.2 L4.5 4.7 Z" fill="#222"/></svg>
<div class="t" style="left:1379.8px;top:62.0px;font-size:10px;color:#333;letter-spacing:0.25px;">Layer</div>
<div class="dd" style="left:1412.4px;top:61.0px;width:181.3px;height:13.0px"></div>
<div class="t" style="left:1417.8px;top:62.0px;font-size:8.5px;color:#1a1a1a;letter-spacing:0.35px;">Default</div>
<svg class="a" style="left:1585px;top:63px;" width="5" height="8" viewBox="0 0 5 8"><path d="M0.5 3.3 L2.5 0.8 L4.5 3.3 Z M0.5 4.7 L2.5 7.2 L4.5 4.7 Z" fill="#222"/></svg>
<svg class="a" style="left:1133.6px;top:85.4px;" width="7" height="6" viewBox="0 0 7 6"><path d="M0 0 L6.6 0 L3.3 5.6 Z" fill="#7a7a7a"/></svg>
<svg class="a" style="left:1143px;top:82px;" width="13" height="11" viewBox="0 0 13 11"><path d="M6 6 V0.5" stroke="#5ac83a" stroke-width="1.6"/><path d="M6 6 L1 9.5" stroke="#2f7fd8" stroke-width="1.6"/><path d="M6 6 L11.5 9" stroke="#d83a2a" stroke-width="1.6"/></svg>
<div class="t" style="left:1171.5px;top:83.0px;font-size:10px;font-weight:bold;color:#111;letter-spacing:0.75px;">Transform</div>
<svg class="a" style="left:1572px;top:81.5px;" width="12" height="12" viewBox="0 0 12 12"><defs><linearGradient id="hb" x1="0" y1="0" x2="1" y2="1"><stop offset="0" stop-color="#9cc4f0"/><stop offset="1" stop-color="#2b56a8"/></linearGradient></defs><path d="M1 1.8 Q1 0.8 2 0.8 H10.2 Q11.2 0.8 11.2 1.8 V10.6 Q11.2 11.6 10.2 11.6 H2.2 Q1 11 1 10 Z" fill="url(#hb)" stroke="#3a3a3a" stroke-width="0.9"/><rect x="1.6" y="1.5" width="1.3" height="9.5" fill="#c8dcf4" opacity="0.8"/><path d="M4.9 4.2 A1.6 1.6 0 1 1 6.8 5.8 L6.2 6.6 V7.4" fill="none" stroke="#f4f8ff" stroke-width="1.1"/><rect x="5.7" y="8.4" width="1.1" height="1.1" fill="#f4f8ff"/></svg>
<svg class="a" style="left:1587px;top:81.5px;" width="12" height="12" viewBox="0 0 12 12"><g transform="translate(5 5.2)"><rect x="-0.9" y="-4.6" width="1.8" height="2.4" fill="#111" transform="rotate(0)"/><rect x="-0.9" y="-4.6" width="1.8" height="2.4" fill="#111" transform="rotate(45)"/><rect x="-0.9" y="-4.6" width="1.8" height="2.4" fill="#111" transform="rotate(90)"/><rect x="-0.9" y="-4.6" width="1.8" height="2.4" fill="#111" transform="rotate(135)"/><rect x="-0.9" y="-4.6" width="1.8" height="2.4" fill="#111" transform="rotate(180)"/><rect x="-0.9" y="-4.6" width="1.8" height="2.4" fill="#111" transform="rotate(225)"/><rect x="-0.9" y="-4.6" width="1.8" height="2.4" fill="#111" transform="rotate(270)"/><rect x="-0.9" y="-4.6" width="1.8" height="2.4" fill="#111" transform="rotate(315)"/><circle r="3.1" fill="#111"/><circle r="1.3" fill="#c6c6c6"/></g><path d="M9.4 8.6 H11.6 L10.5 10.4 Z" fill="#222"/></svg>
<div class="t" style="left:1142.8px;top:96.0px;font-size:10px;color:#1a1a1a;letter-spacing:0.25px;">Position</div>
<div class="t" style="left:1142.8px;top:111.0px;font-size:10px;color:#1a1a1a;letter-spacing:0.25px;">Rotation</div>
<div class="t" style="left:1142.8px;top:126.0px;font-size:10px;color:#1a1a1a;letter-spacing:0.25px;">Scale</div>
<div class="t" style="left:1319.6px;top:96.0px;font-size:10px;color:#333;letter-spacing:0.04999999999999999px;">X</div>
<div class="fld" style="left:1329.2px;top:95.3px;width:80.5px;height:12.7px;"></div>
<div class="t" style="left:1331.6px;top:96.0px;font-size:10px;color:#111;letter-spacing:0.25px;">0</div>
<div class="t" style="left:1413.8px;top:96.0px;font-size:10px;color:#333;letter-spacing:0.04999999999999999px;">Y</div>
<div class="fld" style="left:1423.0px;top:95.3px;width:79.8px;height:12.7px;"></div>
<div class="t" style="left:1425.4px;top:96.0px;font-size:10px;color:#111;letter-spacing:0.25px;">0</div>
<div class="t" style="left:1507.3px;top:96.0px;font-size:10px;color:#333;letter-spacing:0.04999999999999999px;">Z</div>
<div class="fld" style="left:1516.2px;top:95.3px;width:80.1px;height:12.7px;"></div>
<div class="t" style="left:1518.6px;top:96.0px;font-size:10px;color:#111;letter-spacing:0.25px;">8</div>
<div class="t" style="left:1319.6px;top:111.0px;font-size:10px;color:#333;letter-spacing:0.04999999999999999px;">X</div>
<div class="fld" style="left:1329.2px;top:110.7px;width:80.5px;height:12.7px;"></div>
<div class="t" style="left:1331.6px;top:111.0px;font-size:10px;color:#111;letter-spacing:0.25px;">0</div>
<div class="t" style="left:1413.8px;top:111.0px;font-size:10px;color:#333;letter-spacing:0.04999999999999999px;">Y</div>
<div class="fld" style="left:1423.0px;top:110.7px;width:79.8px;height:12.7px;"></div>
<div class="t" style="left:1425.4px;top:111.0px;font-size:10px;color:#111;letter-spacing:0.25px;">0</div>
<div class="t" style="left:1507.3px;top:111.0px;font-size:10px;color:#333;letter-spacing:0.04999999999999999px;">Z</div>
<div class="fld" style="left:1516.2px;top:110.7px;width:80.1px;height:12.7px;"></div>
<div class="t" style="left:1518.6px;top:111.0px;font-size:10px;color:#111;letter-spacing:0.25px;">0</div>
<div class="t" style="left:1319.6px;top:126.0px;font-size:10px;color:#333;letter-spacing:0.04999999999999999px;">X</div>
<div class="fld" style="left:1329.2px;top:125.7px;width:80.5px;height:13.1px;"></div>
<div class="t" style="left:1331.6px;top:126.0px;font-size:10px;color:#111;letter-spacing:0.25px;">1</div>
<div class="t" style="left:1413.8px;top:126.0px;font-size:10px;color:#333;letter-spacing:0.04999999999999999px;">Y</div>
<div class="fld" style="left:1423.0px;top:125.7px;width:79.8px;height:13.1px;"></div>
<div class="t" style="left:1425.4px;top:126.0px;font-size:10px;color:#111;letter-spacing:0.25px;">1</div>
<div class="t" style="left:1507.3px;top:126.0px;font-size:10px;color:#333;letter-spacing:0.04999999999999999px;">Z</div>
<div class="fld" style="left:1516.2px;top:125.7px;width:80.1px;height:13.1px;"></div>
<div class="t" style="left:1518.6px;top:126.0px;font-size:10px;color:#111;letter-spacing:0.25px;">1</div>
<div class="a" style="left:1130.0px;top:142.0px;width:470.0px;height:1.0px;background:#8e8e8e"></div>
<div class="a" style="left:1130.0px;top:143.0px;width:470.0px;height:1.0px;background:#d2d2d2"></div>
<svg class="a" style="left:1133.6px;top:148.5px;" width="7" height="6" viewBox="0 0 7 6"><path d="M0 0 L6.6 0 L3.3 5.6 Z" fill="#7a7a7a"/></svg>
<svg class="a" style="left:1144px;top:144px;" width="11" height="12" viewBox="0 0 11 12"><rect x="0.5" y="0.5" width="10" height="11" rx="1" fill="#7fc4ee" stroke="#3f8fcf" stroke-width="0.8"/><path d="M3.5 1 V11 M7 1 V11 M1 4 H10 M1 8 H10" stroke="#e8f6ff" stroke-width="0.8"/></svg>
<div class="t" style="left:1171.5px;top:146.0px;font-size:10px;font-weight:bold;color:#111;letter-spacing:0.75px;">Capsule (Mesh Filter)</div>
<svg class="a" style="left:1572px;top:144.5px;" width="12" height="12" viewBox="0 0 12 12"><defs><linearGradient id="hb" x1="0" y1="0" x2="1" y2="1"><stop offset="0" stop-color="#9cc4f0"/><stop offset="1" stop-color="#2b56a8"/></linearGradient></defs><path d="M1 1.8 Q1 0.8 2 0.8 H10.2 Q11.2 0.8 11.2 1.8 V10.6 Q11.2 11.6 10.2 11.6 H2.2 Q1 11 1 10 Z" fill="url(#hb)" stroke="#3a3a3a" stroke-width="0.9"/><rect x="1.6" y="1.5" width="1.3" height="9.5" fill="#c8dcf4" opacity="0.8"/><path d="M4.9 4.2 A1.6 1.6 0 1 1 6.8 5.8 L6.2 6.6 V7.4" fill="none" stroke="#f4f8ff" stroke-width="1.1"/><rect x="5.7" y="8.4" width="1.1" height="1.1" fill="#f4f8ff"/></svg>
<svg class="a" style="left:1587px;top:144.5px;" width="12" height="12" viewBox="0 0 12 12"><g transform="translate(5 5.2)"><rect x="-0.9" y="-4.6" width="1.8" height="2.4" fill="#111" transform="rotate(0)"/><rect x="-0.9" y="-4.6" width="1.8" height="2.4" fill="#111" transform="rotate(45)"/><rect x="-0.9" y="-4.6" width="1.8" height="2.4" fill="#111" transform="rotate(90)"/><rect x="-0.9" y="-4.6" width="1.8" height="2.4" fill="#111" transform="rotate(135)"/><rect x="-0.9" y="-4.6" width="1.8" height="2.4" fill="#111" transform="rotate(180)"/><rect x="-0.9" y="-4.6" width="1.8" height="2.4" fill="#111" transform="rotate(225)"/><rect x="-0.9" y="-4.6" width="1.8" height="2.4" fill="#111" transform="rotate(270)"/><rect x="-0.9" y="-4.6" width="1.8" height="2.4" fill="#111" transform="rotate(315)"/><circle r="3.1" fill="#111"/><circle r="1.3" fill="#c6c6c6"/></g><path d="M9.4 8.6 H11.6 L10.5 10.4 Z" fill="#222"/></svg>
<div class="t" style="left:1142.8px;top:159.0px;font-size:10px;color:#1a1a1a;letter-spacing:0.25px;">Mesh</div>
<div class="fld" style="left:1319.0px;top:158.4px;width:262.8px;height:12.6px;"></div>
<svg class="a" style="left:1322px;top:161px;" width="8" height="8" viewBox="0 0 8 8"><rect x="0" y="0" width="7.5" height="7.5" fill="#7a8aa8"/><path d="M2.5 0 V7.5 M5 0 V7.5 M0 2.5 H7.5 M0 5 H7.5" stroke="#b8c4d8" stroke-width="0.6"/></svg>
<div class="t" style="left:1332.6px;top:159.0px;font-size:10px;color:#111;letter-spacing:0.25px;">Capsule</div>
<svg class="a" style="left:1587px;top:160px;" width="9" height="9" viewBox="0 0 9 9"><circle cx="4.2000000000000455" cy="4.099999999999994" r="3" fill="none" stroke="#555" stroke-width="1"/><circle cx="4.2000000000000455" cy="4.099999999999994" r="0.9" fill="#555"/></svg>
<div class="a" style="left:1130.0px;top:174.8px;width:470.0px;height:1.0px;background:#8e8e8e"></div>
<div class="a" style="left:1130.0px;top:175.8px;width:470.0px;height:1.0px;background:#d2d2d2"></div>
<svg class="a" style="left:1133.9px;top:180.8px;" width="7" height="6" viewBox="0 0 7 6"><path d="M0 0 L6.6 0 L3.3 5.6 Z" fill="#7a7a7a"/></svg>
<svg class="a" style="left:1144px;top:177px;" width="10" height="13" viewBox="0 0 10 13"><rect x="0.8" y="0.5" width="8.4" height="12" rx="4.2" fill="#6ab82a" stroke="#4a8a1a" stroke-width="0.6"/><rect x="2.5" y="2" width="2" height="8" rx="1" fill="#b8e878" opacity="0.8"/></svg>
<div class="a" style="left:1158.2px;top:178.5px;width:10px;height:10px;border:1px solid #7d7d7d;border-radius:2px;background:linear-gradient(#fafafa,#dcdcdc)"></div>
<svg class="a" style="left:1159px;top:177px;" width="10" height="11" viewBox="0 0 10 11"><rect x="0" y="1.5" width="8.5" height="8.5" fill="#7fa4d8"/><path d="M1.5 5.5 L4 8.5 L9.5 1" fill="none" stroke="#111" stroke-width="1.9"/></svg>
<div class="t" style="left:1171.7px;top:178.0px;font-size:10px;font-weight:bold;color:#111;letter-spacing:0.75px;">Capsule Collider</div>
<svg class="a" style="left:1572px;top:177.3px;" width="12" height="12" viewBox="0 0 12 12"><defs><linearGradient id="hb" x1="0" y1="0" x2="1" y2="1"><stop offset="0" stop-color="#9cc4f0"/><stop offset="1" stop-color="#2b56a8"/></linearGradient></defs><path d="M1 1.8 Q1 0.8 2 0.8 H10.2 Q11.2 0.8 11.2 1.8 V10.6 Q11.2 11.6 10.2 11.6 H2.2 Q1 11 1 10 Z" fill="url(#hb)" stroke="#3a3a3a" stroke-width="0.9"/><rect x="1.6" y="1.5" width="1.3" height="9.5" fill="#c8dcf4" opacity="0.8"/><path d="M4.9 4.2 A1.6 1.6 0 1 1 6.8 5.8 L6.2 6.6 V7.4" fill="none" stroke="#f4f8ff" stroke-width="1.1"/><rect x="5.7" y="8.4" width="1.1" height="1.1" fill="#f4f8ff"/></svg>
<svg class="a" style="left:1587px;top:177.3px;" width="12" height="12" viewBox="0 0 12 12"><g transform="translate(5 5.2)"><rect x="-0.9" y="-4.6" width="1.8" height="2.4" fill="#111" transform="rotate(0)"/><rect x="-0.9" y="-4.6" width="1.8" height="2.4" fill="#111" transform="rotate(45)"/><rect x="-0.9" y="-4.6" width="1.8" height="2.4" fill="#111" transform="rotate(90)"/><rect x="-0.9" y="-4.6" width="1.8" height="2.4" fill="#111" transform="rotate(135)"/><rect x="-0.9" y="-4.6" width="1.8" height="2.4" fill="#111" transform="rotate(180)"/><rect x="-0.9" y="-4.6" width="1.8" height="2.4" fill="#111" transform="rotate(225)"/><rect x="-0.9" y="-4.6" width="1.8" height="2.4" fill="#111" transform="rotate(270)"/><rect x="-0.9" y="-4.6" width="1.8" height="2.4" fill="#111" transform="rotate(315)"/><circle r="3.1" fill="#111"/><circle r="1.3" fill="#c6c6c6"/></g><path d="M9.4 8.6 H11.6 L10.5 10.4 Z" fill="#222"/></svg>
<div class="btn" style="left:1318.8px;top:192.5px;width:27.6px;height:19px;border-color:#8a8a8a;background:linear-gradient(#f6f6f6,#dcdcdc)"></div>
<svg class="a" style="left:1326px;top:196px;" width="13" height="12" viewBox="0 0 13 12"><path d="M2 9.5 L6.2 2.5 L10.5 8" fill="none" stroke="#222" stroke-width="1.1"/><circle cx="2" cy="9.5" r="1.5" fill="#f0f0f0" stroke="#222" stroke-width="0.9"/><circle cx="6.2" cy="2.5" r="1.5" fill="#f0f0f0" stroke="#222" stroke-width="0.9"/><circle cx="10.5" cy="8" r="1.5" fill="#f0f0f0" stroke="#222" stroke-width="0.9"/></svg>
<div class="t" style="left:1352.6px;top:197.0px;font-size:10px;color:#1a1a1a;letter-spacing:0.25px;">Edit Collider</div>
<div class="t" style="left:1142.7px;top:216.0px;font-size:10px;color:#1a1a1a;letter-spacing:0.25px;">Is Trigger</div>
<div class="a" style="left:1318.8px;top:217.2px;width:10px;height:10px;border:1px solid #7d7d7d;border-radius:2px;background:linear-gradient(#fafafa,#dcdcdc)"></div>
<div class="t" style="left:1142.7px;top:232.0px;font-size:10px;color:#1a1a1a;letter-spacing:0.25px;">Material</div>
<div class="fld" style="left:1319.0px;top:230.7px;width:262.8px;height:12.3px;"></div>
<div class="t" style="left:1321.5px;top:232.0px;font-size:10px;color:#111;letter-spacing:0.25px;">None (Physic Material)</div>
<svg class="a" style="left:1587px;top:232px;" width="9" height="9" viewBox="0 0 9 9"><circle cx="4.2000000000000455" cy="4.599999999999994" r="3" fill="none" stroke="#555" stroke-width="1"/><circle cx="4.2000000000000455" cy="4.599999999999994" r="0.9" fill="#555"/></svg>
<div class="t" style="left:1142.7px;top:246.0px;font-size:10px;color:#1a1a1a;letter-spacing:0.25px;">Center</div>
<div class="t" style="left:1319.6px;top:247.0px;font-size:10px;color:#333;letter-spacing:0.04999999999999999px;">X</div>
<div class="fld" style="left:1329.2px;top:245.4px;width:80.5px;height:12.6px;"></div>
<div class="t" style="left:1331.6px;top:247.0px;font-size:10px;color:#111;letter-spacing:0.25px;">0</div>
<div class="t" style="left:1413.8px;top:247.0px;font-size:10px;color:#333;letter-spacing:0.04999999999999999px;">Y</div>
<div class="fld" style="left:1423.0px;top:245.4px;width:79.8px;height:12.6px;"></div>
<div class="t" style="left:1425.4px;top:247.0px;font-size:10px;color:#111;letter-spacing:0.25px;">0</div>
<div class="t" style="left:1507.3px;top:247.0px;font-size:10px;color:#333;letter-spacing:0.04999999999999999px;">Z</div>
<div class="fld" style="left:1516.2px;top:245.4px;width:80.1px;height:12.6px;"></div>
<div class="t" style="left:1518.6px;top:247.0px;font-size:10px;color:#111;letter-spacing:0.25px;">0</div>
<div class="t" style="left:1142.7px;top:261.0px;font-size:10px;color:#1a1a1a;letter-spacing:0.25px;">Radius</div>
<div class="fld" style="left:1319.0px;top:260.6px;width:277.3px;height:12.4px;"></div>
<div class="t" style="left:1321.5px;top:262.0px;font-size:10px;color:#111;letter-spacing:0.25px;">0.5</div>
<div class="t" style="left:1142.7px;top:276.0px;font-size:10px;color:#1a1a1a;letter-spacing:0.25px;">Height</div>
<div class="fld" style="left:1319.0px;top:275.6px;width:277.3px;height:12.4px;"></div>
<div class="t" style="left:1321.5px;top:277.0px;font-size:10px;color:#111;letter-spacing:0.25px;">2</div>
<div class="t" style="left:1142.7px;top:292.0px;font-size:10px;color:#1a1a1a;letter-spacing:0.25px;">Direction</div>
<div class="dd" style="left:1319.0px;top:291.0px;width:277.3px;height:12.0px"></div>
<div class="t" style="left:1323.5px;top:291.0px;font-size:8.5px;color:#1a1a1a;letter-spacing:0.35px;">Y-Axis</div>
<svg class="a" style="left:1588px;top:293px;" width="5" height="8" viewBox="0 0 5 8"><path d="M0.5 3.3 L2.5 0.8 L4.5 3.3 Z M0.5 4.7 L2.5 7.2 L4.5 4.7 Z" fill="#222"/></svg>
<div class="a" style="left:1130.0px;top:307.3px;width:470.0px;height:1.0px;background:#8e8e8e"></div>
<div class="a" style="left:1130.0px;top:308.3px;width:470.0px;height:1.0px;background:#d2d2d2"></div>
<svg class="a" style="left:1133.3px;top:313px;" width="7" height="6" viewBox="0 0 7 6"><path d="M0 0 L6.6 0 L3.3 5.6 Z" fill="#7a7a7a"/></svg>
<svg class="a" style="left:1144px;top:310px;" width="12" height="13" viewBox="0 0 12 13"><rect x="0.5" y="0.5" width="9" height="10" rx="1" fill="#8ccaf0" stroke="#4a90c8" stroke-width="0.8"/><path d="M3.5 1 V10 M6.5 1 V10 M1 4 H9 M1 7 H9" stroke="#e8f6ff" stroke-width="0.7"/><ellipse cx="8" cy="10" rx="3.5" ry="2.2" fill="#fff" stroke="#3a70b0" stroke-width="0.7"/><circle cx="8" cy="10" r="1" fill="#3a70b0"/></svg>
<div class="a" style="left:1158.4px;top:311.5px;width:10px;height:10px;border:1px solid #7d7d7d;border-radius:2px;background:linear-gradient(#fafafa,#dcdcdc)"></div>
<svg class="a" style="left:1159px;top:310px;" width="10" height="11" viewBox="0 0 10 11"><rect x="0" y="1.5" width="8.5" height="8.5" fill="#7fa4d8"/><path d="M1.5 5.5 L4 8.5 L9.5 1" fill="none" stroke="#111" stroke-width="1.9"/></svg>
<div class="t" style="left:1171.4px;top:311.0px;font-size:10px;font-weight:bold;color:#111;letter-spacing:0.75px;">Mesh Renderer</div>
<svg class="a" style="left:1572px;top:310px;" width="12" height="12" viewBox="0 0 12 12"><defs><linearGradient id="hb" x1="0" y1="0" x2="1" y2="1"><stop offset="0" stop-color="#9cc4f0"/><stop offset="1" stop-color="#2b56a8"/></linearGradient></defs><path d="M1 1.8 Q1 0.8 2 0.8 H10.2 Q11.2 0.8 11.2 1.8 V10.6 Q11.2 11.6 10.2 11.6 H2.2 Q1 11 1 10 Z" fill="url(#hb)" stroke="#3a3a3a" stroke-width="0.9"/><rect x="1.6" y="1.5" width="1.3" height="9.5" fill="#c8dcf4" opacity="0.8"/><path d="M4.9 4.2 A1.6 1.6 0 1 1 6.8 5.8 L6.2 6.6 V7.4" fill="none" stroke="#f4f8ff" stroke-width="1.1"/><rect x="5.7" y="8.4" width="1.1" height="1.1" fill="#f4f8ff"/></svg>
<svg class="a" style="left:1587px;top:310px;" width="12" height="12" viewBox="0 0 12 12"><g transform="translate(5 5.2)"><rect x="-0.9" y="-4.6" width="1.8" height="2.4" fill="#111" transform="rotate(0)"/><rect x="-0.9" y="-4.6" width="1.8" height="2.4" fill="#111" transform="rotate(45)"/><rect x="-0.9" y="-4.6" width="1.8" height="2.4" fill="#111" transform="rotate(90)"/><rect x="-0.9" y="-4.6" width="1.8" height="2.4" fill="#111" transform="rotate(135)"/><rect x="-0.9" y="-4.6" width="1.8" height="2.4" fill="#111" transform="rotate(180)"/><rect x="-0.9" y="-4.6" width="1.8" height="2.4" fill="#111" transform="rotate(225)"/><rect x="-0.9" y="-4.6" width="1.8" height="2.4" fill="#111" transform="rotate(270)"/><rect x="-0.9" y="-4.6" width="1.8" height="2.4" fill="#111" transform="rotate(315)"/><circle r="3.1" fill="#111"/><circle r="1.3" fill="#c6c6c6"/></g><path d="M9.4 8.6 H11.6 L10.5 10.4 Z" fill="#222"/></svg>
<svg class="a" style="left:1133.5px;top:327.8px;" width="6" height="7" viewBox="0 0 6 7"><path d="M0 0 L5.6 3.3 L0 6.6 Z" fill="#7a7a7a"/></svg>
<div class="t" style="left:1142.5px;top:325.0px;font-size:10px;color:#1a1a1a;letter-spacing:0.25px;">Lighting</div>
<svg class="a" style="left:1133.5px;top:342.8px;" width="6" height="7" viewBox="0 0 6 7"><path d="M0 0 L5.6 3.3 L0 6.6 Z" fill="#7a7a7a"/></svg>
<div class="t" style="left:1142.5px;top:340.0px;font-size:10px;color:#1a1a1a;letter-spacing:0.25px;">Materials</div>
<div class="t" style="left:1142.5px;top:355.0px;font-size:10px;color:#1a1a1a;letter-spacing:0.25px;">Dynamic Occluded</div>
<div class="a" style="left:1319.5px;top:355.8px;width:10px;height:10px;border:1px solid #7d7d7d;border-radius:2px;background:linear-gradient(#fafafa,#dcdcdc)"></div>
<svg class="a" style="left:1320px;top:354px;" width="10" height="11" viewBox="0 0 10 11"><rect x="0" y="1.5" width="8.5" height="8.5" fill="#7fa4d8"/><path d="M1.5 5.5 L4 8.5 L9.5 1" fill="none" stroke="#111" stroke-width="1.9"/></svg>
<div class="a" style="left:1130.0px;top:370.6px;width:470.0px;height:1.0px;background:#8e8e8e"></div>
<div class="a" style="left:1130.0px;top:371.6px;width:470.0px;height:1.0px;background:#d2d2d2"></div>
<svg class="a" style="left:1133.3px;top:376.5px;" width="7" height="6" viewBox="0 0 7 6"><path d="M0 0 L6.6 0 L3.3 5.6 Z" fill="#7a7a7a"/></svg>
<svg class="a" style="left:1143px;top:374px;" width="12" height="12" viewBox="0 0 12 12"><path d="M1 0.5 H8 L10.5 3 V11.5 H1 Z" fill="#f4f4f4" stroke="#777" stroke-width="0.8"/><circle cx="5.5" cy="6.5" r="3" fill="none" stroke="#2a7ad0" stroke-width="1.1"/><path d="M5 5.5 H7 M5 7.5 H7" stroke="#2a7ad0" stroke-width="0.6"/></svg>
<div class="a" style="left:1158.4px;top:375.2px;width:10px;height:10px;border:1px solid #7d7d7d;border-radius:2px;background:linear-gradient(#fafafa,#dcdcdc)"></div>
<svg class="a" style="left:1159px;top:374px;" width="10" height="11" viewBox="0 0 10 11"><rect x="0" y="1.5" width="8.5" height="8.5" fill="#7fa4d8"/><path d="M1.5 5.5 L4 8.5 L9.5 1" fill="none" stroke="#111" stroke-width="1.9"/></svg>
<div class="t" style="left:1171.4px;top:374.0px;font-size:10px;font-weight:bold;color:#111;letter-spacing:0.75px;">Speech Input Handler (Script)</div>
<svg class="a" style="left:1572px;top:373.8px;" width="12" height="12" viewBox="0 0 12 12"><defs><linearGradient id="hb" x1="0" y1="0" x2="1" y2="1"><stop offset="0" stop-color="#9cc4f0"/><stop offset="1" stop-color="#2b56a8"/></linearGradient></defs><path d="M1 1.8 Q1 0.8 2 0.8 H10.2 Q11.2 0.8 11.2 1.8 V10.6 Q11.2 11.6 10.2 11.6 H2.2 Q1 11 1 10 Z" fill="url(#hb)" stroke="#3a3a3a" stroke-width="0.9"/><rect x="1.6" y="1.5" width="1.3" height="9.5" fill="#c8dcf4" opacity="0.8"/><path d="M4.9 4.2 A1.6 1.6 0 1 1 6.8 5.8 L6.2 6.6 V7.4" fill="none" stroke="#f4f8ff" stroke-width="1.1"/><rect x="5.7" y="8.4" width="1.1" height="1.1" fill="#f4f8ff"/></svg>
<svg class="a" style="left:1587px;top:373.8px;" width="12" height="12" viewBox="0 0 12 12"><g transform="translate(5 5.2)"><rect x="-0.9" y="-4.6" width="1.8" height="2.4" fill="#111" transform="rotate(0)"/><rect x="-0.9" y="-4.6" width="1.8" height="2.4" fill="#111" transform="rotate(45)"/><rect x="-0.9" y="-4.6" width="1.8" height="2.4" fill="#111" transform="rotate(90)"/><rect x="-0.9" y="-4.6" width="1.8" height="2.4" fill="#111" transform="rotate(135)"/><rect x="-0.9" y="-4.6" width="1.8" height="2.4" fill="#111" transform="rotate(180)"/><rect x="-0.9" y="-4.6" width="1.8" height="2.4" fill="#111" transform="rotate(225)"/><rect x="-0.9" y="-4.6" width="1.8" height="2.4" fill="#111" transform="rotate(270)"/><rect x="-0.9" y="-4.6" width="1.8" height="2.4" fill="#111" transform="rotate(315)"/><circle r="3.1" fill="#111"/><circle r="1.3" fill="#c6c6c6"/></g><path d="M9.4 8.6 H11.6 L10.5 10.4 Z" fill="#222"/></svg>
<div class="t" style="left:1142.5px;top:388.0px;font-size:10px;color:#1a1a1a;letter-spacing:0.25px;">Is Global Listener</div>
<div class="a" style="left:1319.5px;top:388.5px;width:10px;height:10px;border:1px solid #7d7d7d;border-radius:2px;background:linear-gradient(#fafafa,#dcdcdc)"></div>
<div class="t" style="left:1142.5px;top:403.0px;font-size:10px;color:#1a1a1a;letter-spacing:0.25px;">Persistent Keywords</div>
<div class="a" style="left:1319.5px;top:403.5px;width:10px;height:10px;border:1px solid #7d7d7d;border-radius:2px;background:linear-gradient(#fafafa,#dcdcdc)"></div>
<svg class="a" style="left:1145.3px;top:420.4px;" width="7" height="6" viewBox="0 0 7 6"><path d="M0 0 L6.6 0 L3.3 5.6 Z" fill="#7a7a7a"/></svg>
<div class="t" style="left:1154.9px;top:418.0px;font-size:10px;color:#1a1a1a;letter-spacing:0.25px;">red</div>
<div class="btn" style="left:1580.2px;top:417.8px;width:16.1px;height:10.8px;border-color:#9a9a9a;background:linear-gradient(#f4f4f4,#dedede)"></div>
<div class="a" style="left:1586.0px;top:423.0px;width:4.0px;height:1.0px;background:#555"></div>
<div class="t" style="left:1154.9px;top:433.0px;font-size:10px;color:#1a1a1a;letter-spacing:0.25px;">Keyword</div>
<div class="dd" style="left:1318.8px;top:432.6px;width:277.5px;height:11.8px"></div>
<div class="t" style="left:1323.1px;top:433.0px;font-size:8.5px;color:#1a1a1a;letter-spacing:0.35px;">red</div>
<svg class="a" style="left:1588px;top:434px;" width="5" height="8" viewBox="0 0 5 8"><path d="M0.5 3.3 L2.5 0.8 L4.5 3.3 Z M0.5 4.7 L2.5 7.2 L4.5 4.7 Z" fill="#222"/></svg>
<div class="a" style="left:1141.9px;top:448.1px;width:453.1px;height:53.3px;border:1px solid #9a9a9a;border-radius:3px 3px 0 0;background:#d5d5d5"></div>
<div class="a" style="left:1142.9px;top:449.1px;width:451.1px;height:12.0px;background:#dedede;border-bottom:1px solid #b0b0b0"></div>
<div class="t" style="left:1147.5px;top:449.0px;font-size:10px;color:#1a1a1a;letter-spacing:0.25px;">Response ()</div>
<div class="t" style="left:1147.2px;top:465.0px;font-size:10px;color:#1a1a1a;letter-spacing:0.25px;">List is Empty</div>
<div class="a" style="left:1549.2px;top:500.4px;width:45.8px;height:13.4px;border:1px solid #9a9a9a;border-top:none;border-radius:0 0 3px 3px;background:#d5d5d5"></div>
<svg class="a" style="left:1558px;top:504px;" width="9" height="9" viewBox="0 0 9 9"><path d="M4.5 0.5 V8.5 M0.5 4.5 H8.5" stroke="#222" stroke-width="1.6"/></svg>
<div class="a" style="left:1578.0px;top:508.0px;width:8.0px;height:1.3px;background:#888"></div>
<div class="btn" style="left:1580.8px;top:517.8px;width:15.5px;height:10.9px;border-color:#9a9a9a;background:linear-gradient(#f4f4f4,#dedede)"></div>
<svg class="a" style="left:1585px;top:519.5px;" width="7" height="7" viewBox="0 0 7 7"><path d="M3.5 1 V6 M1 3.5 H6" stroke="#333" stroke-width="1"/></svg>
<svg class="a" style="left:1288px;top:467px;" width="10" height="16" viewBox="0 0 10 16"><path d="M0.8 0.8 L0.8 13 L3.8 10 L6 15 L8 14 L5.8 9.2 L9.5 9.2 Z" fill="#f8f8f8" stroke="#222" stroke-width="0.9"/></svg>
<div class="a" style="left:1130.0px;top:535.8px;width:470.0px;height:1.2px;background:#7e7e7e"></div>
<div class="a" style="left:1130.0px;top:537.0px;width:470.0px;height:36.0px;background:#d9d9d9"></div>
<div class="a" style="left:1130.0px;top:572.5px;width:470.0px;height:2.0px;background:#e6e6e6"></div>
<div class="a" style="left:1130.0px;top:574.5px;width:470.0px;height:2.0px;background:#c8c8c8"></div>
<div class="a" style="left:1130.0px;top:576.3px;width:470.0px;height:1.0px;background:#7e7e7e"></div>
<svg class="a" style="left:1141px;top:540px;" width="28" height="28" viewBox="0 0 28 28"><defs><radialGradient id="sph" cx="0.38" cy="0.32" r="0.7"><stop offset="0" stop-color="#e8e8e8"/><stop offset="0.45" stop-color="#8a8a8a"/><stop offset="1" stop-color="#1a1a1a"/></radialGradient></defs><rect x="0.5" y="0.5" width="27" height="27" fill="#f0f0f0"/><circle cx="14" cy="14" r="12" fill="url(#sph)"/></svg>
<div class="t" style="left:1176.0px;top:541.0px;font-size:10.5px;color:#1a1a1a;letter-spacing:0.6px;">Default-Material</div>
<div class="t" style="left:1176.0px;top:558.0px;font-size:10px;color:#7a7a7a;letter-spacing:0.25px;">Shader</div>
<div class="dd" style="left:1216.9px;top:557.5px;width:377.2px;height:11.4px;border-color:#a8a8a8;background:linear-gradient(#ececec,#dadada)"></div>
<div class="t" style="left:1221.5px;top:557.0px;font-size:8.5px;color:#5a5a5a;letter-spacing:0.35px;">Standard</div>
<svg class="a" style="left:1586px;top:561px;" width="5" height="3" viewBox="0 0 5 3"><path d="M0 0 L4.5 0 L2.25 2.5 Z" fill="#888"/></svg>
<svg class="a" style="left:1133.5px;top:561.5px;" width="6" height="7" viewBox="0 0 6 7"><path d="M0 0 L5.6 3.3 L0 6.6 Z" fill="#8a8a8a"/></svg>
<svg class="a" style="left:1572px;top:540.8px;" width="12" height="12" viewBox="0 0 12 12"><defs><linearGradient id="hb" x1="0" y1="0" x2="1" y2="1"><stop offset="0" stop-color="#9cc4f0"/><stop offset="1" stop-color="#2b56a8"/></linearGradient></defs><path d="M1 1.8 Q1 0.8 2 0.8 H10.2 Q11.2 0.8 11.2 1.8 V10.6 Q11.2 11.6 10.2 11.6 H2.2 Q1 11 1 10 Z" fill="url(#hb)" stroke="#3a3a3a" stroke-width="0.9"/><rect x="1.6" y="1.5" width="1.3" height="9.5" fill="#c8dcf4" opacity="0.8"/><path d="M4.9 4.2 A1.6 1.6 0 1 1 6.8 5.8 L6.2 6.6 V7.4" fill="none" stroke="#f4f8ff" stroke-width="1.1"/><rect x="5.7" y="8.4" width="1.1" height="1.1" fill="#f4f8ff"/></svg>
<svg class="a" style="left:1587px;top:540.8px;" width="12" height="12" viewBox="0 0 12 12"><g transform="translate(5 5.2)"><rect x="-0.9" y="-4.6" width="1.8" height="2.4" fill="#111" transform="rotate(0)"/><rect x="-0.9" y="-4.6" width="1.8" height="2.4" fill="#111" transform="rotate(45)"/><rect x="-0.9" y="-4.6" width="1.8" height="2.4" fill="#111" transform="rotate(90)"/><rect x="-0.9" y="-4.6" width="1.8" height="2.4" fill="#111" transform="rotate(135)"/><rect x="-0.9" y="-4.6" width="1.8" height="2.4" fill="#111" transform="rotate(180)"/><rect x="-0.9" y="-4.6" width="1.8" height="2.4" fill="#111" transform="rotate(225)"/><rect x="-0.9" y="-4.6" width="1.8" height="2.4" fill="#111" transform="rotate(270)"/><rect x="-0.9" y="-4.6" width="1.8" height="2.4" fill="#111" transform="rotate(315)"/><circle r="3.1" fill="#111"/><circle r="1.3" fill="#c6c6c6"/></g><path d="M9.4 8.6 H11.6 L10.5 10.4 Z" fill="#222"/></svg>
<div class="btn" style="left:1266.4px;top:586.6px;width:192.4px;height:18.9px;border-color:#6e6e6e"></div>
<div class="t" style="left:1320.0px;top:589.0px;font-size:10.5px;color:#1a1a1a;letter-spacing:0.67px;">Add Component</div>
<div class="a" style="left:1128.0px;top:644.0px;width:472.0px;height:260.0px;background:#323232"></div>
<div class="a" style="left:1128.0px;top:644.0px;width:2.0px;height:260.0px;background:#8c8c8c"></div>
<div class="a" style="left:1130.0px;top:644.0px;width:470.0px;height:14.3px;background:linear-gradient(#6a6a6a,#575757)"></div>
<div class="a" style="left:1130.0px;top:657.5px;width:470.0px;height:6.0px;background:linear-gradient(#1e1e1e,#323232)"></div>
<div class="t" style="left:1133.3px;top:646.0px;font-size:10px;font-weight:bold;color:#ececec;letter-spacing:0.79px;">Intercepted Events</div>
<div class="a" style="left:1240.0px;top:649.8px;width:354.0px;height:1.0px;background:#b8b8b8"></div>
<div class="a" style="left:1240.0px;top:652.8px;width:354.0px;height:1.0px;background:#b8b8b8"></div>
<div class="a" style="left:1598.0px;top:658.0px;width:2.0px;height:246.0px;background:#5e5e5e"></div>
<div class="a" style="left:1130.0px;top:902.0px;width:470.0px;height:2.0px;background:#5e5e5e"></div>
<div class="t" style="left:1201.2px;top:770.0px;font-size:10px;font-weight:bold;color:#cdcdcd;letter-spacing:0.8400000000000001px;">SpeechInputHandler</div>
<div class="t" style="left:1201.2px;top:783.0px;font-size:10px;color:#aaaaaa;letter-spacing:0.27px;">OnSpeechKeywordRecognized</div>
<div class="a" style="left:1.0px;top:676.0px;width:1125.0px;height:5.0px;background:#a3a3a3"></div>
<div class="a" style="left:1.0px;top:694.0px;width:1125.0px;height:210.0px;background:#c3c3c3"></div>
<div class="tab" style="left:1px;top:680px;width:83px;height:14px"></div>
<svg class="a" style="left:7px;top:683px;" width="10" height="9" viewBox="0 0 10 9"><path d="M0.5 1 H4 L5 2 H9.5 V8.5 H0.5 Z" fill="#666" stroke="#555" stroke-width="0.7"/><rect x="1" y="3.5" width="8" height="0.9" fill="#999"/></svg>
<div class="t" style="left:20.7px;top:682.0px;font-size:9px;color:#111;letter-spacing:0.75px;">Project</div>
<svg class="a" style="left:91px;top:682px;" width="11" height="11" viewBox="0 0 11 11"><circle cx="5.5" cy="5.5" r="4.6" fill="none" stroke="#444" stroke-width="1"/><path d="M5.5 2.5 V5.5 H8" fill="none" stroke="#444" stroke-width="1"/></svg>
<div class="t" style="left:104.7px;top:682.0px;font-size:9px;color:#2a2a2a;letter-spacing:0.75px;">Animation</div>
<svg class="a" style="left:177px;top:682px;" width="8" height="11" viewBox="0 0 8 11"><rect x="0.5" y="0.5" width="7" height="10" fill="none" stroke="#444" stroke-width="0.9"/><path d="M2 3 H6 M2 5 H6 M2 7 H6" stroke="#444" stroke-width="0.8"/></svg>
<div class="t" style="left:188.7px;top:682.0px;font-size:9px;color:#2a2a2a;letter-spacing:0.75px;">Console</div>
<svg class="a" style="left:1100px;top:684px;" width="8" height="9" viewBox="0 0 8 9"><path d="M2 4 V2.5 A2 2 0 0 1 6 2.5" fill="none" stroke="#3a3a3a" stroke-width="1.1"/><rect x="1" y="4" width="6.5" height="4.5" fill="#3a3a3a"/></svg>
<svg class="a" style="left:1112px;top:687px;" width="12" height="6" viewBox="0 0 12 6"><path d="M0.5 2 L3.5 2 L2 3.8 Z" fill="#333"/><rect x="5" y="0.5" width="6.5" height="1.5" fill="#555"/><rect x="5" y="3" width="6.5" height="1.5" fill="#555"/></svg>
<div class="tb" style="left:1px;top:693.5px;width:1125px;height:15px"></div>
<div class="a" style="left:6.6px;top:695.0px;width:1.0px;height:13.0px;background:#a9a9a9"></div>
<div class="a" style="left:49.9px;top:695.0px;width:1.0px;height:13.0px;background:#a9a9a9"></div>
<div class="t" style="left:11.4px;top:696.0px;font-size:8.5px;color:#222;letter-spacing:0.35px;">Create</div>
<svg class="a" style="left:43px;top:699px;" width="5" height="3" viewBox="0 0 5 3"><path d="M0 0 L4.5 0 L2.25 2.5 Z" fill="#333"/></svg>
<div class="a" style="left:805.4px;top:695.5px;width:252px;height:12px;border:1px solid #8c8c8c;border-radius:6px;background:#e2e2e2"></div>
<svg class="a" style="left:811px;top:698px;" width="8" height="8" viewBox="0 0 8 8"><circle cx="3.2" cy="3.2" r="2.3" fill="none" stroke="#555" stroke-width="1"/><path d="M4.8 4.8 L7 7" stroke="#555" stroke-width="1.1"/></svg>
<div class="a" style="left:1066.0px;top:695.0px;width:1.0px;height:13.0px;background:#a9a9a9"></div>
<div class="a" style="left:1084.4px;top:695.0px;width:1.0px;height:13.0px;background:#a9a9a9"></div>
<div class="a" style="left:1103.2px;top:695.0px;width:1.0px;height:13.0px;background:#a9a9a9"></div>
<div class="a" style="left:1121.5px;top:695.0px;width:1.0px;height:13.0px;background:#a9a9a9"></div>
<svg class="a" style="left:1070px;top:697px;" width="11" height="10" viewBox="0 0 11 10"><path d="M0.5 9 L3.5 3 L6.5 9 Z" fill="#333"/><circle cx="6.5" cy="3" r="2.3" fill="#333"/><rect x="6" y="6" width="4" height="3.5" fill="#333"/></svg>
<svg class="a" style="left:1088px;top:697px;" width="11" height="10" viewBox="0 0 11 10"><path d="M1 4.5 L4.5 1 H9.5 V6 L6 9.5 Z" fill="#3a3a3a"/><circle cx="7.3" cy="3.2" r="1" fill="#ddd"/></svg>
<svg class="a" style="left:1107px;top:697px;" width="11" height="10" viewBox="0 0 11 10"><path d="M5.5 0.5 L6.9 3.8 L10.5 3.9 L7.7 6.1 L8.7 9.5 L5.5 7.6 L2.3 9.5 L3.3 6.1 L0.5 3.9 L4.1 3.8 Z" fill="#8a8a8a"/></svg>
<div class="a" style="left:1.0px;top:709.0px;width:1.0px;height:195.0px;background:#dcdcdc"></div>
<div class="a" style="left:278.0px;top:708.5px;width:1.0px;height:196.0px;background:#9a9a9a"></div>
<svg class="a" style="left:5px;top:714px;" width="7" height="6" viewBox="0 0 7 6"><path d="M0 0 L6.6 0 L3.3 5.6 Z" fill="#7a7a7a"/></svg>
<svg class="a" style="left:15px;top:710px;" width="12" height="12" viewBox="0 0 12 12"><path d="M6 0.5 L7.6 4 L11.5 4.3 L8.5 6.8 L9.5 10.8 L6 8.7 L2.5 10.8 L3.5 6.8 L0.5 4.3 L4.4 4 Z" fill="#f7d21e" stroke="#c89a10" stroke-width="0.7"/></svg>
<div class="t" style="left:29.8px;top:711.0px;font-size:10px;font-weight:bold;color:#111;letter-spacing:0.75px;">Favorites</div>
<svg class="a" style="left:26px;top:723px;" width="13" height="13" viewBox="0 0 13 13"><circle cx="5.2" cy="5.2" r="4" fill="none" stroke="#c8a800" stroke-width="2"/><circle cx="5.2" cy="5.2" r="4" fill="none" stroke="#f2d21a" stroke-width="1.1"/><path d="M8 8 L11.5 11.5" stroke="#c8a800" stroke-width="2.4" stroke-linecap="round"/><path d="M8 8 L11.3 11.3" stroke="#f2d21a" stroke-width="1.2" stroke-linecap="round"/></svg>
<div class="t" style="left:41.6px;top:725.0px;font-size:10px;color:#151515;letter-spacing:0.27px;">All In Progress</div>
<svg class="a" style="left:26px;top:737px;" width="13" height="13" viewBox="0 0 13 13"><circle cx="5.2" cy="5.2" r="4" fill="none" stroke="#c8a800" stroke-width="2"/><circle cx="5.2" cy="5.2" r="4" fill="none" stroke="#f2d21a" stroke-width="1.1"/><path d="M8 8 L11.5 11.5" stroke="#c8a800" stroke-width="2.4" stroke-linecap="round"/><path d="M8 8 L11.3 11.3" stroke="#f2d21a" stroke-width="1.2" stroke-linecap="round"/></svg>
<div class="t" style="left:41.6px;top:738.0px;font-size:10px;color:#151515;letter-spacing:0.27px;">All Conflicts</div>
<svg class="a" style="left:26px;top:750px;" width="13" height="13" viewBox="0 0 13 13"><circle cx="5.2" cy="5.2" r="4" fill="none" stroke="#c8a800" stroke-width="2"/><circle cx="5.2" cy="5.2" r="4" fill="none" stroke="#f2d21a" stroke-width="1.1"/><path d="M8 8 L11.5 11.5" stroke="#c8a800" stroke-width="2.4" stroke-linecap="round"/><path d="M8 8 L11.3 11.3" stroke="#f2d21a" stroke-width="1.2" stroke-linecap="round"/></svg>
<div class="t" style="left:41.6px;top:752.0px;font-size:10px;color:#151515;letter-spacing:0.27px;">All Excluded</div>
<svg class="a" style="left:26px;top:763px;" width="13" height="13" viewBox="0 0 13 13"><circle cx="5.2" cy="5.2" r="4" fill="none" stroke="#c8a800" stroke-width="2"/><circle cx="5.2" cy="5.2" r="4" fill="none" stroke="#f2d21a" stroke-width="1.1"/><path d="M8 8 L11.5 11.5" stroke="#c8a800" stroke-width="2.4" stroke-linecap="round"/><path d="M8 8 L11.3 11.3" stroke="#f2d21a" stroke-width="1.2" stroke-linecap="round"/></svg>
<div class="t" style="left:41.6px;top:765.0px;font-size:10px;color:#151515;letter-spacing:0.27px;">All Materials</div>
<svg class="a" style="left:26px;top:777px;" width="13" height="13" viewBox="0 0 13 13"><circle cx="5.2" cy="5.2" r="4" fill="none" stroke="#c8a800" stroke-width="2"/><circle cx="5.2" cy="5.2" r="4" fill="none" stroke="#f2d21a" stroke-width="1.1"/><path d="M8 8 L11.5 11.5" stroke="#c8a800" stroke-width="2.4" stroke-linecap="round"/><path d="M8 8 L11.3 11.3" stroke="#f2d21a" stroke-width="1.2" stroke-linecap="round"/></svg>
<div class="t" style="left:41.6px;top:778.0px;font-size:10px;color:#151515;letter-spacing:0.27px;">All Models</div>
<svg class="a" style="left:26px;top:790px;" width="13" height="13" viewBox="0 0 13 13"><circle cx="5.2" cy="5.2" r="4" fill="none" stroke="#c8a800" stroke-width="2"/><circle cx="5.2" cy="5.2" r="4" fill="none" stroke="#f2d21a" stroke-width="1.1"/><path d="M8 8 L11.5 11.5" stroke="#c8a800" stroke-width="2.4" stroke-linecap="round"/><path d="M8 8 L11.3 11.3" stroke="#f2d21a" stroke-width="1.2" stroke-linecap="round"/></svg>
<div class="t" style="left:41.6px;top:792.0px;font-size:10px;color:#151515;letter-spacing:0.27px;">All Prefabs</div>
<svg class="a" style="left:26px;top:804px;" width="13" height="13" viewBox="0 0 13 13"><circle cx="5.2" cy="5.2" r="4" fill="none" stroke="#c8a800" stroke-width="2"/><circle cx="5.2" cy="5.2" r="4" fill="none" stroke="#f2d21a" stroke-width="1.1"/><path d="M8 8 L11.5 11.5" stroke="#c8a800" stroke-width="2.4" stroke-linecap="round"/><path d="M8 8 L11.3 11.3" stroke="#f2d21a" stroke-width="1.2" stroke-linecap="round"/></svg>
<div class="t" style="left:41.6px;top:805.0px;font-size:10px;color:#151515;letter-spacing:0.27px;">All Modified</div>
<svg class="a" style="left:26px;top:817px;" width="13" height="13" viewBox="0 0 13 13"><circle cx="5.2" cy="5.2" r="4" fill="none" stroke="#c8a800" stroke-width="2"/><circle cx="5.2" cy="5.2" r="4" fill="none" stroke="#f2d21a" stroke-width="1.1"/><path d="M8 8 L11.5 11.5" stroke="#c8a800" stroke-width="2.4" stroke-linecap="round"/><path d="M8 8 L11.3 11.3" stroke="#f2d21a" stroke-width="1.2" stroke-linecap="round"/></svg>
<div class="t" style="left:41.6px;top:819.0px;font-size:10px;color:#151515;letter-spacing:0.27px;">All Conflicted</div>
<div class="a" style="left:1.0px;top:842.9px;width:277.0px;height:12.7px;background:#8b9095"></div>
<svg class="a" style="left:5px;top:846px;" width="7" height="6" viewBox="0 0 7 6"><path d="M0 0 L6.6 0 L3.3 5.6 Z" fill="#666"/></svg>
<svg class="a" style="left:14px;top:844px;" width="13" height="11" viewBox="0 0 13 11"><defs><linearGradient id="fg" x1="0" y1="0" x2="0" y2="1"><stop offset="0" stop-color="#c8c8c8"/><stop offset="1" stop-color="#6a6a6a"/></linearGradient></defs><path d="M0.5 1.5 H4.5 L5.5 2.5 H12 V10.5 H0.5 Z" fill="url(#fg)" stroke="#555" stroke-width="0.8"/><rect x="1" y="4" width="11" height="1" fill="#eee"/></svg>
<div class="t" style="left:30.1px;top:845.0px;font-size:10px;font-weight:bold;color:#f4f4f4;letter-spacing:0.75px;">Assets</div>
<svg class="a" style="left:16.6px;top:860px;" width="6" height="7" viewBox="0 0 6 7"><path d="M0 0 L5.6 3.3 L0 6.6 Z" fill="#7a7a7a"/></svg>
<svg class="a" style="left:26px;top:857px;" width="13" height="11" viewBox="0 0 13 11"><defs><linearGradient id="fg" x1="0" y1="0" x2="0" y2="1"><stop offset="0" stop-color="#c8c8c8"/><stop offset="1" stop-color="#6a6a6a"/></linearGradient></defs><path d="M0.5 1.5 H4.5 L5.5 2.5 H12 V10.5 H0.5 Z" fill="url(#fg)" stroke="#555" stroke-width="0.8"/><rect x="1" y="4" width="11" height="1" fill="#eee"/></svg>
<div class="t" style="left:41.6px;top:858.0px;font-size:10px;color:#151515;letter-spacing:0.27px;">HoloToolkit</div>
<svg class="a" style="left:26px;top:871px;" width="13" height="11" viewBox="0 0 13 11"><defs><linearGradient id="fg" x1="0" y1="0" x2="0" y2="1"><stop offset="0" stop-color="#c8c8c8"/><stop offset="1" stop-color="#6a6a6a"/></linearGradient></defs><path d="M0.5 1.5 H4.5 L5.5 2.5 H12 V10.5 H0.5 Z" fill="url(#fg)" stroke="#555" stroke-width="0.8"/><rect x="1" y="4" width="11" height="1" fill="#eee"/></svg>
<div class="t" style="left:41.6px;top:872.0px;font-size:10px;color:#151515;letter-spacing:0.27px;">Materials</div>
<svg class="a" style="left:26px;top:884px;" width="13" height="11" viewBox="0 0 13 11"><defs><linearGradient id="fg" x1="0" y1="0" x2="0" y2="1"><stop offset="0" stop-color="#c8c8c8"/><stop offset="1" stop-color="#6a6a6a"/></linearGradient></defs><path d="M0.5 1.5 H4.5 L5.5 2.5 H12 V10.5 H0.5 Z" fill="url(#fg)" stroke="#555" stroke-width="0.8"/><rect x="1" y="4" width="11" height="1" fill="#eee"/></svg>
<div class="t" style="left:41.6px;top:885.0px;font-size:10px;color:#151515;letter-spacing:0.27px;">Scenes</div>
<div class="a" style="left:279.0px;top:708.5px;width:847.0px;height:14.8px;background:#dedede;border-bottom:1px solid #a9a9a9"></div>
<div class="t" style="left:284.8px;top:711.0px;font-size:10px;font-weight:bold;color:#111;letter-spacing:0.75px;">Assets</div>
<svg class="a" style="left:325px;top:714px;" width="5" height="6" viewBox="0 0 5 6"><path d="M0 0 L4 2.75 L0 5.5 Z" fill="#777"/></svg>
<svg class="a" style="left:292px;top:725px;" width="13" height="11" viewBox="0 0 13 11"><defs><linearGradient id="fg" x1="0" y1="0" x2="0" y2="1"><stop offset="0" stop-color="#c8c8c8"/><stop offset="1" stop-color="#6a6a6a"/></linearGradient></defs><path d="M0.5 1.5 H4.5 L5.5 2.5 H12 V10.5 H0.5 Z" fill="url(#fg)" stroke="#555" stroke-width="0.8"/><rect x="1" y="4" width="11" height="1" fill="#eee"/></svg>
<div class="t" style="left:307.6px;top:726.0px;font-size:10px;color:#151515;letter-spacing:0.27px;">HoloToolkit</div>
<svg class="a" style="left:292px;top:739px;" width="13" height="11" viewBox="0 0 13 11"><defs><linearGradient id="fg" x1="0" y1="0" x2="0" y2="1"><stop offset="0" stop-color="#c8c8c8"/><stop offset="1" stop-color="#6a6a6a"/></linearGradient></defs><path d="M0.5 1.5 H4.5 L5.5 2.5 H12 V10.5 H0.5 Z" fill="url(#fg)" stroke="#555" stroke-width="0.8"/><rect x="1" y="4" width="11" height="1" fill="#eee"/></svg>
<div class="t" style="left:307.6px;top:740.0px;font-size:10px;color:#151515;letter-spacing:0.27px;">Materials</div>
<svg class="a" style="left:292px;top:753px;" width="13" height="11" viewBox="0 0 13 11"><defs><linearGradient id="fg" x1="0" y1="0" x2="0" y2="1"><stop offset="0" stop-color="#c8c8c8"/><stop offset="1" stop-color="#6a6a6a"/></linearGradient></defs><path d="M0.5 1.5 H4.5 L5.5 2.5 H12 V10.5 H0.5 Z" fill="url(#fg)" stroke="#555" stroke-width="0.8"/><rect x="1" y="4" width="11" height="1" fill="#eee"/></svg>
<div class="t" style="left:307.6px;top:754.0px;font-size:10px;color:#151515;letter-spacing:0.27px;">Scenes</div>
<div class="a" style="left:279.0px;top:890.0px;width:847.0px;height:14.0px;background:#dedede;border-top:1px solid #b0b0b0"></div>
<div class="a" style="left:1069.0px;top:896.0px;width:44.0px;height:2.0px;background:#8a8a8a;border-radius:1px"></div>
<svg class="a" style="left:1064px;top:891px;" width="10" height="10" viewBox="0 0 10 10"><circle cx="5" cy="5" r="4" fill="#f4f4f4" stroke="#777" stroke-width="0.9"/></svg>
</body></html>
